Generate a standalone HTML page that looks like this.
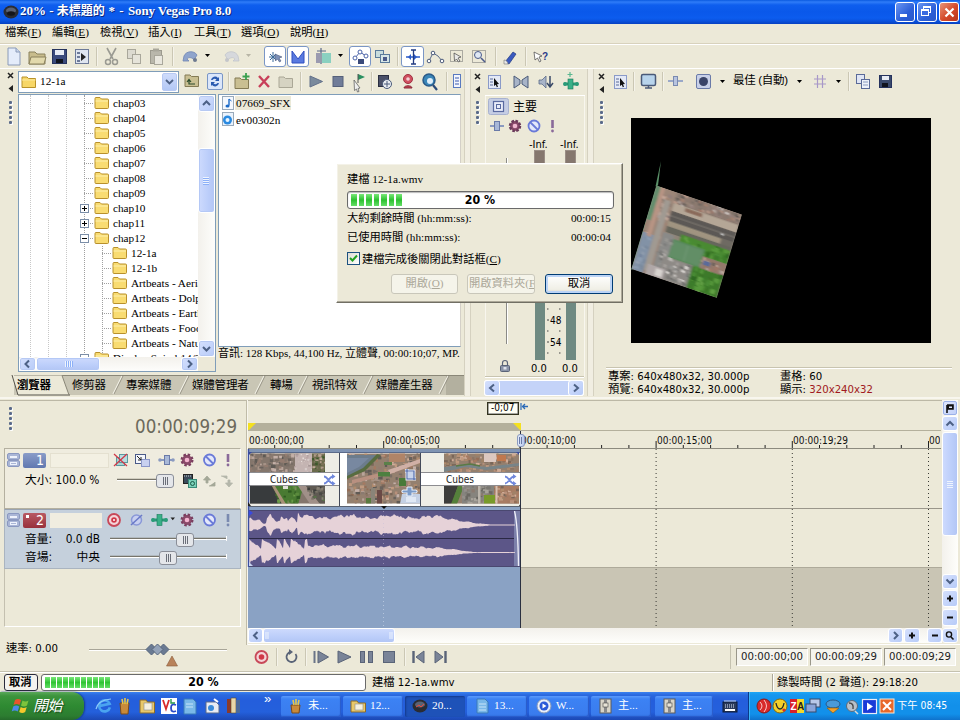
<!DOCTYPE html>
<html lang="zh-Hant"><head><meta charset="utf-8"><title>Sony Vegas Pro 8.0</title>
<style>
*{box-sizing:border-box;margin:0;padding:0}
html,body{width:960px;height:720px;overflow:hidden;background:#ece9d8}
body{position:relative;font-family:"Liberation Sans","Noto Sans CJK TC",sans-serif;font-size:12px;color:#000}
.a{position:absolute}
.ming{font-family:"Liberation Serif","Noto Sans CJK TC",serif}
.tah{font-family:"DejaVu Sans Condensed","DejaVu Sans","Liberation Sans","Noto Sans CJK TC",sans-serif;font-stretch:condensed}
.t{position:absolute;white-space:nowrap;line-height:1}
svg{position:absolute;overflow:visible}
</style></head><body>
<!-- title bar -->
<div class="a" style="left:0;top:0;width:960px;height:24px;background:linear-gradient(180deg,#0a5ae0 0,#2f7cf8 2px,#0e5eee 5px,#0a58ea 12px,#0c5cee 18px,#0a52de 21px,#0640c0 24px)"></div>
<svg style="left:3px;top:4px" width="16" height="16" viewBox="0 0 16 16"><ellipse cx="8" cy="8" rx="7.5" ry="6.5" fill="#2a2c33"/><ellipse cx="8" cy="6.5" rx="5" ry="3" fill="#5a6274"/><ellipse cx="8" cy="9.5" rx="4" ry="2.2" fill="#15161a"/></svg>
<div class="t ming" style="left:20px;top:4px;font-size:13px;font-weight:bold;color:#fff;text-shadow:1px 1px 0 #0a2a80" id="ttl">20% - <span style="font-size:12px">未標題的</span><span style="letter-spacing:0.5px"> * - </span><span style="letter-spacing:-0.12px">Sony Vegas Pro 8.0</span></div>
<!-- window buttons -->
<div class="a" style="left:895px;top:2px;width:20px;height:20px;border:1px solid #fff;border-radius:3px;background:linear-gradient(135deg,#6a96f2,#2c5fd8 60%,#2a58c8)"></div>
<div class="a" style="left:900px;top:14px;width:7px;height:3px;background:#fff"></div>
<div class="a" style="left:917px;top:2px;width:20px;height:20px;border:1px solid #fff;border-radius:3px;background:linear-gradient(135deg,#6a96f2,#2c5fd8 60%,#2a58c8)"></div>
<div class="a" style="left:923px;top:6px;width:8px;height:7px;border:1px solid #fff;border-top-width:2px"></div>
<div class="a" style="left:921px;top:9px;width:8px;height:7px;border:1px solid #fff;border-top-width:2px;background:#3a6ae0"></div>
<div class="a" style="left:939px;top:2px;width:20px;height:20px;border:1px solid #fff;border-radius:3px;background:linear-gradient(135deg,#e89478,#d4492a 55%,#b8351c)"></div>
<svg style="left:943.5px;top:6.5px" width="11" height="11" viewBox="0 0 11 11"><path d="M1.5 1.5 L9.5 9.5 M9.5 1.5 L1.5 9.5" stroke="#fff" stroke-width="2.2"/></svg>
<!-- menu bar -->
<div class="a" style="left:0;top:24px;width:960px;height:20px;background:#ece9d8"></div>
<div class="t ming" style="left:5px;top:27px;font-size:11.25px">檔案(<u>F</u>)</div>
<div class="t ming" style="left:52px;top:27px;font-size:11.25px">編輯(<u>E</u>)</div>
<div class="t ming" style="left:100px;top:27px;font-size:11.25px">檢視(<u>V</u>)</div>
<div class="t ming" style="left:148px;top:27px;font-size:11.25px">插入(<u>I</u>)</div>
<div class="t ming" style="left:194px;top:27px;font-size:11.25px">工具(<u>T</u>)</div>
<div class="t ming" style="left:241px;top:27px;font-size:11.25px">選項(<u>O</u>)</div>
<div class="t ming" style="left:290px;top:27px;font-size:11.25px">說明(<u>H</u>)</div>
<div class="a" style="left:0;top:43px;width:960px;height:1px;background:#d8d2bd"></div>
<div class="a" style="left:0;top:44px;width:960px;height:1px;background:#fff"></div>
<!-- main toolbar -->
<div class="a" style="left:0;top:45px;width:960px;height:23px;background:#ece9d8"></div>
<svg style="left:0;top:45px" width="560" height="23" viewBox="0 45 560 23">
<!-- new -->
<path d="M8 48h8l4 4v13H8z" fill="#e4ecfa" stroke="#8a9ab8" stroke-width="1"/><path d="M16 48v4h4" fill="#c9d6ec" stroke="#8a9ab8"/>
<!-- open -->
<path d="M29 52h6l2 2h8v10H29z" fill="#c8bc8c" stroke="#8a815c"/><path d="M31 57h15l-2 7H29z" fill="#e2d9ac" stroke="#8a815c"/>
<!-- save -->
<rect x="52.500" y="49.500" width="14" height="14" fill="#3a4a7c" stroke="#26335e"/><rect x="55" y="50" width="9" height="5" fill="#e8ecf4"/><rect x="56" y="59" width="7" height="4" fill="#10141f"/>
<!-- render as -->
<rect x="75.500" y="49.500" width="13" height="14" fill="#dfe5f0" stroke="#6d7a99"/><path d="M81 53l5 4-5 4z" fill="#222"/><rect x="77" y="52" width="3" height="2" fill="#6d7a99"/><rect x="77" y="56" width="3" height="2" fill="#6d7a99"/><rect x="77" y="60" width="3" height="2" fill="#6d7a99"/>
<path d="M96.500 47v19" stroke="#cbc7b4"/><path d="M97.500 47v19" stroke="#f5f3ea"/>
<!-- cut -->
<path d="M107 48l6 11M116 48l-6 11" stroke="#9a9a92" stroke-width="1.600" fill="none"/><circle cx="108" cy="62" r="2.500" fill="none" stroke="#9a9a92" stroke-width="1.500"/><circle cx="115" cy="62" r="2.500" fill="none" stroke="#9a9a92" stroke-width="1.500"/>
<!-- copy -->
<rect x="127.500" y="49.500" width="8" height="9" fill="#dcdad0" stroke="#a9a79b"/><rect x="132.500" y="54.500" width="8" height="9" fill="#e6e4da" stroke="#a9a79b"/>
<!-- paste -->
<rect x="150.500" y="50.500" width="11" height="13" fill="#b9b7ab" stroke="#9c9a8e"/><rect x="154.500" y="55.500" width="8" height="9" fill="#e9e7de" stroke="#a9a79b"/><rect x="153" y="48.500" width="6" height="3" fill="#a9a79b"/>
<path d="M172.500 47v19" stroke="#cbc7b4"/><path d="M173.500 47v19" stroke="#f5f3ea"/>
<!-- undo -->
<path d="M184 56c2-5 10-6 13-1l-3 5c-2-3-6-3-7-1l2 2h-6z" fill="#8fa4cc" stroke="#6e84b3" stroke-width=".8"/><circle cx="195" cy="60" r="2" fill="#6e7a90"/>
<path d="M205 54h5l-2.500 3z" fill="#000"/>
<!-- redo (disabled) -->
<path d="M238 56c-2-5-10-6-13-1l3 5c2-3 6-3 7-1l-2 2h6z" fill="#d6d8dc" stroke="#c2c5cc" stroke-width=".8"/><circle cx="227" cy="60" r="2" fill="#c4c6ca"/>
<path d="M246 54h5l-2.500 3z" fill="#b8b5a6"/>
<!-- pressed buttons -->
<rect x="264.500" y="46.500" width="21" height="20" rx="2.500" fill="#fff" stroke="#7a96c6"/>
<path d="M269 57h9M273 52v10M270 54l6 6M276 54l-6 6" stroke="#3a6a9a" stroke-width="1"/><path d="M275 54l7 3-3 1 2 3-1.500 1-2-3-2 2z" fill="#7c90b8" stroke="#49597c" stroke-width=".6"/>
<rect x="287.500" y="46.500" width="21" height="20" rx="2.500" fill="#fff" stroke="#7a96c6"/>
<path d="M292 51v12h12v-12l-6 8z" fill="#5a7ae0" stroke="#3050c0"/>
<!-- snapping teal icon -->
<rect x="316" y="53" width="4" height="10" fill="#9a9ab0"/><rect x="322" y="53" width="9" height="10" fill="#8ad0c0"/><path d="M321 48v16M317 51h9" stroke="#5a6a8a" stroke-width="1.200"/>
<path d="M338 54h5l-2.500 3z" fill="#000"/>
<rect x="349.500" y="46.500" width="21" height="20" rx="2.500" fill="#fff" stroke="#7a96c6"/>
<path d="M355 58l5-6 6 4" stroke="#4a62a8" fill="none"/><circle cx="355" cy="58" r="2" fill="#fff" stroke="#4a62a8"/><circle cx="360" cy="52" r="2" fill="#fff" stroke="#4a62a8"/><circle cx="366" cy="56" r="2" fill="#fff" stroke="#4a62a8"/><rect x="358" y="59" width="6" height="5" fill="#3a4a7a"/>
<!-- ignore event grouping -->
<rect x="375.500" y="50.500" width="8" height="7" fill="#c8dcdc" stroke="#5a7a9a"/><rect x="380.500" y="54.500" width="9" height="8" fill="#d6e6e6" stroke="#5a7a9a"/><rect x="383" y="57" width="4" height="4" fill="#4a5a8a"/>
<path d="M397.500 47v19" stroke="#cbc7b4"/><path d="M398.500 47v19" stroke="#f5f3ea"/>
<rect x="401.500" y="46.500" width="22" height="20" rx="2.500" fill="#fff" stroke="#7a96c6"/>
<path d="M406 57h14" stroke="#2a5ac8" stroke-width="1.500"/><path d="M408 57l3-3v6z M417 57l-3-3v6z" fill="#2a5ac8"/><path d="M413.500 50v14M411 50h5M411 64h5" stroke="#223a80" stroke-width="1.300"/>
<!-- envelope tool -->
<path d="M429 61l4-8 5 3 4 5" stroke="#5a6a8a" fill="none"/><circle cx="429" cy="61" r="1.800" fill="#fff" stroke="#4a5a7a"/><circle cx="433" cy="53" r="1.800" fill="#fff" stroke="#4a5a7a"/><circle cx="442" cy="61" r="1.800" fill="#fff" stroke="#4a5a7a"/>
<!-- selection tool -->
<rect x="450.500" y="50.500" width="12" height="11" fill="none" stroke="#6a6a6a" stroke-dasharray="1 1"/><path d="M454 53l7 4-3 1 2 3-1.500 1-2-3-2 2z" fill="#e8e8e8" stroke="#444" stroke-width=".7"/>
<!-- zoom tool -->
<rect x="472.500" y="50.500" width="13" height="12" fill="none" stroke="#6a6a6a" stroke-dasharray="1 1"/><circle cx="478" cy="55" r="3.500" fill="#dfe8f4" stroke="#4a5a8a"/><path d="M481 58l4 4" stroke="#4a5a8a" stroke-width="1.600"/>
<path d="M495.500 47v19" stroke="#cbc7b4"/><path d="M496.500 47v19" stroke="#f5f3ea"/>
<!-- properties -->
<path d="M505 62l8-10 3 2-7 10z" fill="#3a5ac0" stroke="#223a80" stroke-width=".7"/><path d="M504 60c2 0 4 2 4 4h-4z" fill="#e8e8e8" stroke="#777" stroke-width=".6"/>
<path d="M525.500 47v19" stroke="#cbc7b4"/><path d="M526.500 47v19" stroke="#f5f3ea"/>
<!-- whats this -->
<path d="M534 52l8 4-3 1 2 4-1.500 1-2-4-2.500 2z" fill="#fff" stroke="#444" stroke-width=".7"/><text x="542" y="60" font-family="Liberation Sans" font-size="10" font-weight="bold" fill="#2a3a8a">?</text>
</svg>
<!-- explorer panel -->
<div class="a" style="left:0;top:68px;width:960px;height:1px;background:#fff"></div>
<svg style="left:7px;top:72px" width="8" height="22" viewBox="0 0 8 22"><path d="M1 1l5 5M6 1l-5 5" stroke="#222" stroke-width="1.500"/><path d="M6 13v7l-4.500-3.500z" fill="#222"/></svg>
<div class="a" style="left:9px;top:101px;width:3px;height:3px;background:#5a6a8a;border-radius:1px;box-shadow:1px 1px 0 #fff"></div><div class="a" style="left:9px;top:106px;width:3px;height:3px;background:#5a6a8a;border-radius:1px;box-shadow:1px 1px 0 #fff"></div><div class="a" style="left:9px;top:111px;width:3px;height:3px;background:#5a6a8a;border-radius:1px;box-shadow:1px 1px 0 #fff"></div><div class="a" style="left:9px;top:116px;width:3px;height:3px;background:#5a6a8a;border-radius:1px;box-shadow:1px 1px 0 #fff"></div><div class="a" style="left:9px;top:121px;width:3px;height:3px;background:#5a6a8a;border-radius:1px;box-shadow:1px 1px 0 #fff"></div>
<div class="a" style="left:18px;top:71px;width:161px;height:22px;background:#fff;border:1px solid #7f9db9"></div>
<svg style="left:21px;top:74px" width="16" height="15" viewBox="0 0 16 15"><path d="M1 3h5l1.500 1.500h7v9H1z" fill="#f7d768" stroke="#b8922a"/><path d="M1 6h13.500" stroke="#fbeaa0"/></svg>
<div class="t ming" style="left:40px;top:76px;font-size:11.25px">12-1a</div>
<div class="a" style="left:162px;top:73px;width:15px;height:18px;background:linear-gradient(#cfdcfb,#b3c8f5);border:1px solid #b7c9f3;border-radius:2px"></div>
<svg style="left:165px;top:79px" width="9" height="6" viewBox="0 0 9 6"><path d="M1 1l3.500 3.500L8 1" stroke="#4d6185" stroke-width="1.800" fill="none"/></svg>
<svg style="left:0;top:69px" width="470" height="26" viewBox="0 69 470 26">
<path d="M185 75h5l1.500 1.500h7v10H185z" fill="#c9bf92" stroke="#847b55"/><path d="M195 84h-6v-4m-2 2l2-2.500 2 2.500" stroke="#2a4a2a" fill="none" stroke-width="1.200"/>
<rect x="207.500" y="73.500" width="15" height="16" rx="1.500" fill="#dbe6fa" stroke="#7a96c6"/><path d="M211 80a4 4 0 0 1 7-2l1-1v4h-4l1.500-1.500a2.500 2.500 0 0 0-4 .5zM219 83a4 4 0 0 1-7 2l-1 1v-4h4l-1.500 1.500a2.500 2.500 0 0 0 4-.5z" fill="#2a5ab0"/>
<path d="M228.500 72v19" stroke="#cbc7b4"/><path d="M229.500 72v19" stroke="#f5f3ea"/>
<path d="M235 78h5l1.500 1.500h7v9H235z" fill="#c9bf92" stroke="#847b55"/><path d="M246 73v7M242.500 76.500h7" stroke="#3aa050" stroke-width="1.800"/>
<path d="M259 76l10 11M269 76l-10 11" stroke="#c8405a" stroke-width="2.400"/>
<path d="M279 77h5l1.500 1.500h7v9H279z" fill="#d6d3c2" stroke="#aaa796"/>
<path d="M300.500 72v19" stroke="#cbc7b4"/><path d="M301.500 72v19" stroke="#f5f3ea"/>
<path d="M310 76l12.500 5.500-12.500 5.500z" fill="#7a8a9c" stroke="#62708a"/>
<rect x="333" y="76.500" width="10" height="10" fill="#707c98" stroke="#55607a"/>
<path d="M354 80l6 8-2 .5 1 3-1.500.5-1-3-2 1.500z" fill="#eee" stroke="#555" stroke-width=".7"/><path d="M358 74l7 3-7 3z" fill="#2a9060"/><path d="M358 74v9" stroke="#555"/>
<path d="M371.500 72v19" stroke="#cbc7b4"/><path d="M372.500 72v19" stroke="#f5f3ea"/>
<rect x="378.500" y="75.500" width="10" height="11" fill="#4a5068" stroke="#2a2e40"/><circle cx="387" cy="84" r="4.500" fill="#e8ecf2" stroke="#4a5a7a"/><path d="M387 81v6M384 84h6" stroke="#4a5a7a"/>
<circle cx="408" cy="79" r="4.500" fill="#d05060" stroke="#a03040"/><path d="M404 88c0-3 8-3 8 0z" fill="#c04050" stroke="#8a2a38"/><circle cx="408" cy="79" r="1.800" fill="#f4d0d4"/>
<circle cx="429" cy="80" r="6" fill="#3a86b8" stroke="#2a5a88" stroke-width="1.500"/><circle cx="430" cy="81" r="3" fill="#dfeefa"/><path d="M433 85l4 5" stroke="#2a4a78" stroke-width="2.200"/>
<path d="M446.500 72v19" stroke="#cbc7b4"/><path d="M447.500 72v19" stroke="#f5f3ea"/>
<rect x="453.500" y="74.500" width="7" height="13" fill="#f4f6fc" stroke="#5a7ac0"/><path d="M455 78h4M455 81h4M455 84h4" stroke="#3a5ab0"/>
</svg>
<div class="a" style="left:18px;top:94px;width:198px;height:278px;background:#fff;border:1px solid #7f9db9"></div>
<div class="a" style="left:19px;top:95px;width:179px;height:262px;overflow:hidden">
<div class="a" style="left:11px;top:0px;width:0;height:262px;border-left:1px dotted #c8c8c8"></div>
<div class="a" style="left:29px;top:0px;width:0;height:262px;border-left:1px dotted #c8c8c8"></div>
<div class="a" style="left:47px;top:0px;width:0;height:262px;border-left:1px dotted #c8c8c8"></div>
<div class="a" style="left:65px;top:0px;width:0;height:262px;border-left:1px dotted #a0a0a0"></div>
<div class="a" style="left:83px;top:151px;width:0;height:111px;border-left:1px dotted #a0a0a0"></div>
<div class="a" style="left:65px;top:8px;width:9px;height:0;border-top:1px dotted #a0a0a0"></div>
<svg style="left:75px;top:1px" width="16" height="13" viewBox="0 0 16 13"><path d="M1 2.500q0-1 1-1h4l1.500 1.500h6q1 0 1 1v7.500q0 1-1 1h-11.500q-1 0-1-1z" fill="#f9dc72" stroke="#b8902c"/><path d="M1.500 5h12.500" stroke="#fdf0b0"/></svg>
<div class="t ming" style="left:94px;top:3px;font-size:11.25px">chap03</div>
<div class="a" style="left:65px;top:23px;width:9px;height:0;border-top:1px dotted #a0a0a0"></div>
<svg style="left:75px;top:16px" width="16" height="13" viewBox="0 0 16 13"><path d="M1 2.500q0-1 1-1h4l1.500 1.500h6q1 0 1 1v7.500q0 1-1 1h-11.500q-1 0-1-1z" fill="#f9dc72" stroke="#b8902c"/><path d="M1.500 5h12.500" stroke="#fdf0b0"/></svg>
<div class="t ming" style="left:94px;top:18px;font-size:11.25px">chap04</div>
<div class="a" style="left:65px;top:38px;width:9px;height:0;border-top:1px dotted #a0a0a0"></div>
<svg style="left:75px;top:31px" width="16" height="13" viewBox="0 0 16 13"><path d="M1 2.500q0-1 1-1h4l1.500 1.500h6q1 0 1 1v7.500q0 1-1 1h-11.500q-1 0-1-1z" fill="#f9dc72" stroke="#b8902c"/><path d="M1.500 5h12.500" stroke="#fdf0b0"/></svg>
<div class="t ming" style="left:94px;top:33px;font-size:11.25px">chap05</div>
<div class="a" style="left:65px;top:53px;width:9px;height:0;border-top:1px dotted #a0a0a0"></div>
<svg style="left:75px;top:46px" width="16" height="13" viewBox="0 0 16 13"><path d="M1 2.500q0-1 1-1h4l1.500 1.500h6q1 0 1 1v7.500q0 1-1 1h-11.500q-1 0-1-1z" fill="#f9dc72" stroke="#b8902c"/><path d="M1.500 5h12.500" stroke="#fdf0b0"/></svg>
<div class="t ming" style="left:94px;top:48px;font-size:11.25px">chap06</div>
<div class="a" style="left:65px;top:68px;width:9px;height:0;border-top:1px dotted #a0a0a0"></div>
<svg style="left:75px;top:61px" width="16" height="13" viewBox="0 0 16 13"><path d="M1 2.500q0-1 1-1h4l1.500 1.500h6q1 0 1 1v7.500q0 1-1 1h-11.500q-1 0-1-1z" fill="#f9dc72" stroke="#b8902c"/><path d="M1.500 5h12.500" stroke="#fdf0b0"/></svg>
<div class="t ming" style="left:94px;top:63px;font-size:11.25px">chap07</div>
<div class="a" style="left:65px;top:83px;width:9px;height:0;border-top:1px dotted #a0a0a0"></div>
<svg style="left:75px;top:76px" width="16" height="13" viewBox="0 0 16 13"><path d="M1 2.500q0-1 1-1h4l1.500 1.500h6q1 0 1 1v7.500q0 1-1 1h-11.500q-1 0-1-1z" fill="#f9dc72" stroke="#b8902c"/><path d="M1.500 5h12.500" stroke="#fdf0b0"/></svg>
<div class="t ming" style="left:94px;top:78px;font-size:11.25px">chap08</div>
<div class="a" style="left:65px;top:98px;width:9px;height:0;border-top:1px dotted #a0a0a0"></div>
<svg style="left:75px;top:91px" width="16" height="13" viewBox="0 0 16 13"><path d="M1 2.500q0-1 1-1h4l1.500 1.500h6q1 0 1 1v7.500q0 1-1 1h-11.500q-1 0-1-1z" fill="#f9dc72" stroke="#b8902c"/><path d="M1.500 5h12.500" stroke="#fdf0b0"/></svg>
<div class="t ming" style="left:94px;top:93px;font-size:11.25px">chap09</div>
<div class="a" style="left:65px;top:113px;width:9px;height:0;border-top:1px dotted #a0a0a0"></div>
<div class="a" style="left:61px;top:109px;width:9px;height:9px;background:#fff;border:1px solid #7b8ea8"></div><div class="a" style="left:63px;top:113px;width:5px;height:1px;background:#000"></div><div class="a" style="left:65px;top:111px;width:1px;height:5px;background:#000"></div>
<svg style="left:75px;top:106px" width="16" height="13" viewBox="0 0 16 13"><path d="M1 2.500q0-1 1-1h4l1.500 1.500h6q1 0 1 1v7.500q0 1-1 1h-11.500q-1 0-1-1z" fill="#f9dc72" stroke="#b8902c"/><path d="M1.500 5h12.500" stroke="#fdf0b0"/></svg>
<div class="t ming" style="left:94px;top:108px;font-size:11.25px">chap10</div>
<div class="a" style="left:65px;top:128px;width:9px;height:0;border-top:1px dotted #a0a0a0"></div>
<div class="a" style="left:61px;top:124px;width:9px;height:9px;background:#fff;border:1px solid #7b8ea8"></div><div class="a" style="left:63px;top:128px;width:5px;height:1px;background:#000"></div><div class="a" style="left:65px;top:126px;width:1px;height:5px;background:#000"></div>
<svg style="left:75px;top:121px" width="16" height="13" viewBox="0 0 16 13"><path d="M1 2.500q0-1 1-1h4l1.500 1.500h6q1 0 1 1v7.500q0 1-1 1h-11.500q-1 0-1-1z" fill="#f9dc72" stroke="#b8902c"/><path d="M1.500 5h12.500" stroke="#fdf0b0"/></svg>
<div class="t ming" style="left:94px;top:123px;font-size:11.25px">chap11</div>
<div class="a" style="left:65px;top:143px;width:9px;height:0;border-top:1px dotted #a0a0a0"></div>
<div class="a" style="left:61px;top:139px;width:9px;height:9px;background:#fff;border:1px solid #7b8ea8"></div><div class="a" style="left:63px;top:143px;width:5px;height:1px;background:#000"></div>
<svg style="left:75px;top:136px" width="16" height="13" viewBox="0 0 16 13"><path d="M1 2.500q0-1 1-1h4l1.500 1.500h6q1 0 1 1v7.500q0 1-1 1h-11.500q-1 0-1-1z" fill="#f9dc72" stroke="#b8902c"/><path d="M1.500 5h12.500" stroke="#fdf0b0"/></svg>
<div class="t ming" style="left:94px;top:138px;font-size:11.25px">chap12</div>
<div class="a" style="left:83px;top:158px;width:9px;height:0;border-top:1px dotted #a0a0a0"></div>
<svg style="left:93px;top:151px" width="16" height="13" viewBox="0 0 16 13"><path d="M1 2.500q0-1 1-1h4l1.500 1.500h6q1 0 1 1v7.500q0 1-1 1h-11.500q-1 0-1-1z" fill="#f9dc72" stroke="#b8902c"/><path d="M1.500 5h12.500" stroke="#fdf0b0"/></svg>
<div class="t ming" style="left:112px;top:153px;font-size:11.25px">12-1a</div>
<div class="a" style="left:83px;top:173px;width:9px;height:0;border-top:1px dotted #a0a0a0"></div>
<svg style="left:93px;top:166px" width="16" height="13" viewBox="0 0 16 13"><path d="M1 2.500q0-1 1-1h4l1.500 1.500h6q1 0 1 1v7.500q0 1-1 1h-11.500q-1 0-1-1z" fill="#f9dc72" stroke="#b8902c"/><path d="M1.500 5h12.500" stroke="#fdf0b0"/></svg>
<div class="t ming" style="left:112px;top:168px;font-size:11.25px">12-1b</div>
<div class="a" style="left:83px;top:188px;width:9px;height:0;border-top:1px dotted #a0a0a0"></div>
<svg style="left:93px;top:181px" width="16" height="13" viewBox="0 0 16 13"><path d="M1 2.500q0-1 1-1h4l1.500 1.500h6q1 0 1 1v7.500q0 1-1 1h-11.500q-1 0-1-1z" fill="#f9dc72" stroke="#b8902c"/><path d="M1.500 5h12.500" stroke="#fdf0b0"/></svg>
<div class="t ming" style="left:112px;top:183px;font-size:11.25px">Artbeats - Aeria</div>
<div class="a" style="left:83px;top:203px;width:9px;height:0;border-top:1px dotted #a0a0a0"></div>
<svg style="left:93px;top:196px" width="16" height="13" viewBox="0 0 16 13"><path d="M1 2.500q0-1 1-1h4l1.500 1.500h6q1 0 1 1v7.500q0 1-1 1h-11.500q-1 0-1-1z" fill="#f9dc72" stroke="#b8902c"/><path d="M1.500 5h12.500" stroke="#fdf0b0"/></svg>
<div class="t ming" style="left:112px;top:198px;font-size:11.25px">Artbeats - Dolp</div>
<div class="a" style="left:83px;top:218px;width:9px;height:0;border-top:1px dotted #a0a0a0"></div>
<svg style="left:93px;top:211px" width="16" height="13" viewBox="0 0 16 13"><path d="M1 2.500q0-1 1-1h4l1.500 1.500h6q1 0 1 1v7.500q0 1-1 1h-11.500q-1 0-1-1z" fill="#f9dc72" stroke="#b8902c"/><path d="M1.500 5h12.500" stroke="#fdf0b0"/></svg>
<div class="t ming" style="left:112px;top:213px;font-size:11.25px">Artbeats - Earth</div>
<div class="a" style="left:83px;top:233px;width:9px;height:0;border-top:1px dotted #a0a0a0"></div>
<svg style="left:93px;top:226px" width="16" height="13" viewBox="0 0 16 13"><path d="M1 2.500q0-1 1-1h4l1.500 1.500h6q1 0 1 1v7.500q0 1-1 1h-11.500q-1 0-1-1z" fill="#f9dc72" stroke="#b8902c"/><path d="M1.500 5h12.500" stroke="#fdf0b0"/></svg>
<div class="t ming" style="left:112px;top:228px;font-size:11.25px">Artbeats - Food</div>
<div class="a" style="left:83px;top:248px;width:9px;height:0;border-top:1px dotted #a0a0a0"></div>
<svg style="left:93px;top:241px" width="16" height="13" viewBox="0 0 16 13"><path d="M1 2.500q0-1 1-1h4l1.500 1.500h6q1 0 1 1v7.500q0 1-1 1h-11.500q-1 0-1-1z" fill="#f9dc72" stroke="#b8902c"/><path d="M1.500 5h12.500" stroke="#fdf0b0"/></svg>
<div class="t ming" style="left:112px;top:243px;font-size:11.25px">Artbeats - Natu</div>
<div class="a" style="left:65px;top:263px;width:9px;height:0;border-top:1px dotted #a0a0a0"></div>
<div class="a" style="left:61px;top:259px;width:9px;height:9px;background:#fff;border:1px solid #7b8ea8"></div><div class="a" style="left:63px;top:263px;width:5px;height:1px;background:#000"></div>
<svg style="left:75px;top:256px" width="16" height="13" viewBox="0 0 16 13"><path d="M1 2.500q0-1 1-1h4l1.500 1.500h6q1 0 1 1v7.500q0 1-1 1h-11.500q-1 0-1-1z" fill="#f9dc72" stroke="#b8902c"/><path d="M1.500 5h12.500" stroke="#fdf0b0"/></svg>
<div class="t ming" style="left:94px;top:258px;font-size:11.25px">Display Spiral 14/3</div>
</div>
<div class="a" style="left:198px;top:95px;width:17px;height:262px;background:linear-gradient(90deg,#f3f1ec,#fdfdfb)"></div>
<div class="a" style="left:198px;top:95px;width:17px;height:17px;background:linear-gradient(135deg,#d5e0fd,#b7cbf8);border:1px solid #fff;border-radius:3px;box-shadow:inset 0 0 0 1px #b7c9f3"></div><svg style="left:0;top:0" width="960" height="720"><path d="M203.0 105.0L206.5 101.5L210.0 105.0" stroke="#4d6185" stroke-width="2" fill="none"/></svg>
<div class="a" style="left:198px;top:148px;width:17px;height:65px;background:linear-gradient(90deg,#cddafd,#bccefa 60%,#b3c6f5);border:1px solid #fff;border-radius:3px;box-shadow:inset 0 0 0 1px #b4c8f6"></div><div class="a" style="left:203px;top:177px;width:6px;height:1px;background:#eef4fe;box-shadow:0 1px 0 #8cb0f8"></div><div class="a" style="left:203px;top:179px;width:6px;height:1px;background:#eef4fe;box-shadow:0 1px 0 #8cb0f8"></div><div class="a" style="left:203px;top:181px;width:6px;height:1px;background:#eef4fe;box-shadow:0 1px 0 #8cb0f8"></div><div class="a" style="left:203px;top:183px;width:6px;height:1px;background:#eef4fe;box-shadow:0 1px 0 #8cb0f8"></div>
<div class="a" style="left:198px;top:340px;width:17px;height:17px;background:linear-gradient(135deg,#d5e0fd,#b7cbf8);border:1px solid #fff;border-radius:3px;box-shadow:inset 0 0 0 1px #b7c9f3"></div><svg style="left:0;top:0" width="960" height="720"><path d="M203.0 347.0L206.5 350.5L210.0 347.0" stroke="#4d6185" stroke-width="2" fill="none"/></svg>
<div class="a" style="left:19px;top:357px;width:179px;height:14px;background:linear-gradient(#f3f1ec,#fdfdfb)"></div>
<div class="a" style="left:198px;top:357px;width:17px;height:14px;background:#ece9d8"></div>
<div class="a" style="left:19px;top:357px;width:17px;height:14px;background:linear-gradient(135deg,#d5e0fd,#b7cbf8);border:1px solid #fff;border-radius:3px;box-shadow:inset 0 0 0 1px #b7c9f3"></div><svg style="left:0;top:0" width="960" height="720"><path d="M29.0 360.5L25.5 364.0L29.0 367.5" stroke="#4d6185" stroke-width="2" fill="none"/></svg>
<div class="a" style="left:36px;top:357px;width:64px;height:14px;background:linear-gradient(180deg,#cddafd,#bccefa 60%,#b3c6f5);border:1px solid #fff;border-radius:3px;box-shadow:inset 0 0 0 1px #b4c8f6"></div><div class="a" style="left:65px;top:361px;width:1px;height:6px;background:#eef4fe;box-shadow:1px 0 0 #8cb0f8"></div><div class="a" style="left:67px;top:361px;width:1px;height:6px;background:#eef4fe;box-shadow:1px 0 0 #8cb0f8"></div><div class="a" style="left:69px;top:361px;width:1px;height:6px;background:#eef4fe;box-shadow:1px 0 0 #8cb0f8"></div><div class="a" style="left:71px;top:361px;width:1px;height:6px;background:#eef4fe;box-shadow:1px 0 0 #8cb0f8"></div>
<div class="a" style="left:181px;top:357px;width:17px;height:14px;background:linear-gradient(135deg,#d5e0fd,#b7cbf8);border:1px solid #fff;border-radius:3px;box-shadow:inset 0 0 0 1px #b7c9f3"></div><svg style="left:0;top:0" width="960" height="720"><path d="M188.0 360.5L191.5 364.0L188.0 367.5" stroke="#4d6185" stroke-width="2" fill="none"/></svg>
<div class="a" style="left:218px;top:94px;width:243px;height:253px;background:#fff;border:1px solid #7f9db9;border-right-color:#d4d0c8"></div>
<div class="a" style="left:235px;top:96px;width:56px;height:14px;background:#ece9d8"></div>
<svg style="left:221px;top:96px" width="14" height="32" viewBox="0 0 14 32"><rect x="1.500" y=".5" width="11" height="13" fill="#f4f8fe" stroke="#9ab"/><path d="M8 3v6.500" stroke="#1a6ac8" stroke-width="1.400"/><ellipse cx="6.500" cy="10" rx="2" ry="1.500" fill="#1a6ac8"/><path d="M8 3l2.500 2" stroke="#1a6ac8"/><rect x="1.500" y="16.500" width="11" height="13" fill="#eaf2fc" stroke="#9ab"/><circle cx="6.500" cy="24" r="4.500" fill="#2a8ae0"/><circle cx="6.500" cy="24" r="2" fill="#e8f4ff"/></svg>
<div class="t ming" style="left:236px;top:98px;font-size:11.25px">07669_SFX</div>
<div class="t ming" style="left:236px;top:114.500px;font-size:11.25px">ev00302n</div>
<div class="t ming" style="left:218px;top:348px;font-size:11px;" id="info">音訊: 128 Kbps, 44,100 Hz, 立體聲, 00:00:10;07, MP.</div>
<div class="a" style="left:461px;top:340px;width:9px;height:25px;background:#ece9d8"></div>
<div class="a" style="left:14px;top:375px;width:451px;height:1px;background:#8a8778"></div>
<div class="a" style="left:14px;top:376px;width:451px;height:19px;background:#c9c6b5"></div>
<div class="a" style="left:446px;top:376px;width:19px;height:19px;background:#b3b09f"></div>
<svg style="left:0;top:375px" width="470" height="21" viewBox="0 375 470 21">
<path d="M12 375.500h50l7 19.500H18z" fill="#ece9d8"/><path d="M12 375l6 20h52" stroke="#55524a" fill="none" stroke-width="1"/><path d="M62 375.500l7 19.500" stroke="#8a8778"/>
<path d="M113 394l9-18M179 394l9-18M255 394l9-18M298 394l9-18M363 394l9-18M439 394l9-18" stroke="#f4f2e8" stroke-width="1.200"/>
<path d="M114 394l9-18M180 394l9-18M256 394l9-18M299 394l9-18M364 394l9-18M440 394l9-18" stroke="#8a8778" stroke-width=".8"/>
</svg>
<div class="t" style="left:17px;top:380px;font-size:11.5px;font-weight:bold;letter-spacing:-0.2px">瀏覽器</div>
<div class="t" style="left:72px;top:380px;font-size:11.5px;letter-spacing:-0.2px">修剪器</div>
<div class="t" style="left:126px;top:380px;font-size:11.5px;letter-spacing:-0.2px">專案媒體</div>
<div class="t" style="left:192px;top:380px;font-size:11.5px;letter-spacing:-0.2px">媒體管理者</div>
<div class="t" style="left:270px;top:380px;font-size:11.5px;letter-spacing:-0.2px">轉場</div>
<div class="t" style="left:312px;top:380px;font-size:11.5px;letter-spacing:-0.2px">視訊特效</div>
<div class="t" style="left:376px;top:380px;font-size:11.5px;letter-spacing:-0.2px">媒體產生器</div>
<div class="a" style="left:464px;top:69px;width:1px;height:327px;background:#d5d1c0"></div>
<div class="a" style="left:465px;top:69px;width:5px;height:327px;background:#f1eee2"></div>
<!-- mixer panel -->
<div class="a" style="left:470px;top:69px;width:1px;height:327px;background:#d5d1c0"></div>
<svg style="left:474px;top:73px" width="8" height="22" viewBox="0 0 8 22"><path d="M1 1l5 5M6 1l-5 5" stroke="#222" stroke-width="1.500"/><path d="M6 13v7l-4.500-3.500z" fill="#222"/></svg>
<div class="a" style="left:476px;top:101px;width:3px;height:3px;background:#5a6a8a;border-radius:1px;box-shadow:1px 1px 0 #fff"></div><div class="a" style="left:476px;top:106px;width:3px;height:3px;background:#5a6a8a;border-radius:1px;box-shadow:1px 1px 0 #fff"></div><div class="a" style="left:476px;top:111px;width:3px;height:3px;background:#5a6a8a;border-radius:1px;box-shadow:1px 1px 0 #fff"></div><div class="a" style="left:476px;top:116px;width:3px;height:3px;background:#5a6a8a;border-radius:1px;box-shadow:1px 1px 0 #fff"></div><div class="a" style="left:476px;top:121px;width:3px;height:3px;background:#5a6a8a;border-radius:1px;box-shadow:1px 1px 0 #fff"></div>
<svg style="left:470px;top:69px" width="120" height="330" viewBox="470 69 120 330">
<rect x="488.500" y="75.500" width="12" height="13" fill="#e4e9f6" stroke="#8a9ac8"/><path d="M490 79h3M490 82h3M490 85h3" stroke="#5a6a98"/><path d="M494 78l5 6-2 .3 1 2.500-1.200.5-1-2.500-1.800 1.200z" fill="#111"/>
<path d="M514 76l6 4v4l-6 4zM528 76l-6 4v4l6 4z" fill="#a8b4c8" stroke="#4a5a78"/>
<path d="M539 80h3l4-4v12l-4-4h-3z" fill="#a8b4c8" stroke="#5a6a88" stroke-width=".8"/><path d="M550 76v10M547 83l3 4 3-4" stroke="#3a4a68" stroke-width="1.500" fill="none"/>
<path d="M564 84h14" stroke="#2a9a78" stroke-width="3"/><rect x="568" y="79" width="5" height="10" fill="#3ab088" stroke="#1a7a5a" stroke-width=".6"/><circle cx="565" cy="84" r="2" fill="#2a9a78"/><circle cx="577" cy="84" r="2" fill="#2a9a78"/><path d="M570 72v5M567.500 74.500h5" stroke="#5ab890" stroke-width="1.200"/>
<path d="M485 95.500h100" stroke="#fff"/><path d="M485.500 96v281M584.500 96v281" stroke="#f8f6ee"/>
<rect x="488.500" y="98.500" width="20" height="16" rx="2" fill="#c5cde4" stroke="#a8b2d0"/><rect x="493.500" y="101.500" width="10" height="10" fill="#e8ecf8" stroke="#5a6aa0" stroke-width="1.200"/><rect x="496.500" y="104.500" width="4" height="4" fill="none" stroke="#5a6aa0"/>
<path d="M490 126h14" stroke="#8a9ac0" stroke-width="2"/><rect x="494.500" y="121.500" width="5" height="9" fill="#a8b8d8" stroke="#6a7aa8"/>
<circle cx="515" cy="126" r="5" fill="#8a4a6a" stroke="#6a3a5a" stroke-width="2.500" stroke-dasharray="2.500 1.400"/><circle cx="515" cy="126" r="2.300" fill="#f0b8d0"/>
<circle cx="534" cy="126" r="5.500" fill="#e4e8fa" stroke="#6a7ad8" stroke-width="1.800"/><path d="M530 122l8 8" stroke="#6a7ad8" stroke-width="1.800"/>
<path d="M552.500 120v8" stroke="#8a6a9a" stroke-width="2.600"/><circle cx="552.500" cy="131" r="1.400" fill="#8a6a9a"/>
<rect x="534" y="150" width="11" height="13" fill="#9a8e86"/><rect x="535" y="151" width="9" height="12" fill="#85776e"/>
<rect x="565" y="150" width="11" height="13" fill="#9a8e86"/><rect x="566" y="151" width="9" height="12" fill="#85776e"/>
<rect x="535" y="164" width="10" height="196" fill="#6f8a82"/><rect x="566" y="164" width="10" height="196" fill="#6f8a82"/>
<path d="M506.500 158v186" stroke="#8a8a86"/><path d="M507.500 158v186" stroke="#fff"/>
<path d="M547 320h2M558 320h2M547 342h2M558 342h2M547 309h1.500M547 331h1.500M547 353h1.500M559 309h1.500M559 331h1.500M559 353h1.500" stroke="#444"/>
<rect x="500.500" y="365.500" width="9" height="6" rx="1" fill="#8a94a8" stroke="#5a6478"/><path d="M502.500 365v-2a2.500 2.500 0 0 1 5 0v2" fill="none" stroke="#5a6478" stroke-width="1.200"/><rect x="503.500" y="367" width="3" height="2.500" fill="#dfe3ec"/>
<path d="M485 376.500h99" stroke="#c8c4b0"/><path d="M485 377.500h99" stroke="#fff"/>
</svg>
<div class="t" style="left:513px;top:101px;font-size:12px">主要</div>
<div class="t tah" style="left:529px;top:139px;font-size:11px;">-Inf.</div>
<div class="t tah" style="left:560px;top:139px;font-size:11px;">-Inf.</div>
<div class="t tah" style="left:550px;top:316px;font-size:10px">48</div>
<div class="t tah" style="left:550px;top:338px;font-size:10px">54</div>
<div class="t tah" style="left:531px;top:363px;font-size:11px">0.0</div>
<div class="t tah" style="left:562px;top:363px;font-size:11px">0.0</div>
<div class="a" style="left:484px;top:380px;width:100px;height:16px;background:#c4d3f8;border:1px solid #fff;border-radius:2px"></div>
<div class="a" style="left:484px;top:380px;width:16px;height:16px;background:linear-gradient(135deg,#d5e0fd,#b7cbf8);border:1px solid #fff;border-radius:3px"></div>
<div class="a" style="left:568px;top:380px;width:16px;height:16px;background:linear-gradient(135deg,#d5e0fd,#b7cbf8);border:1px solid #fff;border-radius:3px"></div>
<svg style="left:484px;top:380px" width="100" height="16" viewBox="0 0 100 16"><path d="M10 4.500L6 8l4 3.500" stroke="#4d6185" stroke-width="2" fill="none"/><path d="M90 4.500L94 8l-4 3.500" stroke="#4d6185" stroke-width="2" fill="none"/></svg>
<div class="a" style="left:587px;top:69px;width:1px;height:327px;background:#d5d1c0"></div>
<div class="a" style="left:588px;top:69px;width:5px;height:327px;background:#f1eee2"></div>
<div class="a" style="left:593px;top:69px;width:1px;height:327px;background:#d5d1c0"></div>
<!-- preview panel -->
<svg style="left:598px;top:73px" width="8" height="22" viewBox="0 0 8 22"><path d="M1 1l5 5M6 1l-5 5" stroke="#222" stroke-width="1.500"/><path d="M6 13v7l-4.500-3.500z" fill="#222"/></svg>
<div class="a" style="left:600px;top:101px;width:3px;height:3px;background:#5a6a8a;border-radius:1px;box-shadow:1px 1px 0 #fff"></div><div class="a" style="left:600px;top:106px;width:3px;height:3px;background:#5a6a8a;border-radius:1px;box-shadow:1px 1px 0 #fff"></div><div class="a" style="left:600px;top:111px;width:3px;height:3px;background:#5a6a8a;border-radius:1px;box-shadow:1px 1px 0 #fff"></div><div class="a" style="left:600px;top:116px;width:3px;height:3px;background:#5a6a8a;border-radius:1px;box-shadow:1px 1px 0 #fff"></div><div class="a" style="left:600px;top:121px;width:3px;height:3px;background:#5a6a8a;border-radius:1px;box-shadow:1px 1px 0 #fff"></div>
<svg style="left:593px;top:69px" width="367" height="30" viewBox="593 69 367 30">
<rect x="614.500" y="75.500" width="12" height="13" fill="#e4e9f6" stroke="#8a9ac8"/><path d="M616 79h3M616 82h3M616 85h3" stroke="#5a6a98"/><path d="M620 78l5 6-2 .3 1 2.500-1.200.5-1-2.500-1.800 1.200z" fill="#111"/>
<path d="M633.500 72v19" stroke="#cbc7b4"/><path d="M634.500 72v19" stroke="#f5f3ea"/>
<rect x="641.500" y="74.500" width="14" height="11" rx="1.500" fill="#b8d4ec" stroke="#4a5a78" stroke-width="1.500"/><path d="M645 88h7M648.500 86v2" stroke="#4a5a78" stroke-width="1.500"/>
<path d="M662.500 72v19" stroke="#cbc7b4"/><path d="M663.500 72v19" stroke="#f5f3ea"/>
<path d="M668 81h15" stroke="#9aa8c8" stroke-width="2"/><rect x="673.500" y="76.500" width="4" height="9" fill="#b8c4e0" stroke="#7a8ab0"/>
<rect x="696.500" y="74.500" width="14" height="14" rx="1.500" fill="#c8d0e8" stroke="#6a7aa8"/><circle cx="703.500" cy="81.500" r="4.500" fill="#3a4468"/>
<path d="M720 80h5l-2.500 3z" fill="#000"/><path d="M797 80h5l-2.500 3z" fill="#000"/><path d="M836 80h5l-2.500 3z" fill="#000"/>
<path d="M814 79h12M814 84h12M817.500 75v13M822.500 75v13" stroke="#a898c8" stroke-width="1.200"/>
<path d="M848.500 72v19" stroke="#cbc7b4"/><path d="M849.500 72v19" stroke="#f5f3ea"/>
<rect x="856.500" y="74.500" width="8" height="9" fill="#dfe5f4" stroke="#5a6a98"/><rect x="861.500" y="79.500" width="8" height="9" fill="#eef2fa" stroke="#5a6a98"/><path d="M863 82h5M863 85h5" stroke="#8a9ac0"/>
<rect x="879.500" y="75.500" width="12" height="12" fill="#3a4a6c" stroke="#26335e"/><rect x="882" y="76" width="7" height="4" fill="#e8ecf4"/><rect x="882" y="83" width="6" height="4" fill="#10141f"/>
</svg>
<div class="t" style="left:733px;top:75px;font-size:11.5px;letter-spacing:-0.3px">最佳 (自動)</div>
<div class="a" style="left:631px;top:118px;width:300px;height:225px;background:#000"></div>
<svg style="left:631px;top:118px" width="300" height="225" viewBox="631 118 300 225"><defs><clipPath id="pvc"><rect x="0" y="0" width="100" height="100"/></clipPath><filter id="bl" x="-5%" y="-5%" width="110%" height="110%"><feGaussianBlur stdDeviation="0.9"/></filter></defs><path d="M661 161l-3 24.500-2.500 1z" fill="#5a9068"/><path d="M656.200 186l-25 83.500 1.200.3 25-83z" fill="#6a9a78"/><g transform="matrix(0.853 0.289 -0.252 0.835 656.700 185.500)" clip-path="url(#pvc)"><rect x="0" y="0" width="100" height="100" fill="#8e8478"/><g filter="url(#bl)"><rect x="0" y="0" width="24" height="100" fill="#9c8678"/><rect x="16.1" y="53.6" width="4.5" height="4.1" fill="#b0a49c"/><rect x="21.5" y="37.1" width="2.1" height="3.3" fill="#a08070"/><rect x="4.8" y="30.9" width="2.5" height="3.3" fill="#a07868"/><rect x="8.4" y="9.6" width="3.0" height="4.0" fill="#94807a"/><rect x="2.2" y="34.7" width="2.6" height="4.2" fill="#a08070"/><rect x="-0.9" y="43.3" width="2.5" height="4.7" fill="#a08070"/><rect x="18.7" y="30.9" width="5.5" height="2.8" fill="#b89888"/><rect x="3.6" y="54.3" width="2.7" height="4.7" fill="#94807a"/><rect x="2.8" y="7.6" width="3.2" height="3.0" fill="#9a8678"/><rect x="12.3" y="33.4" width="3.3" height="4.3" fill="#c4a89a"/><rect x="6.3" y="40.1" width="2.3" height="3.0" fill="#a08070"/><rect x="0.3" y="55.6" width="3.9" height="4.0" fill="#8a7a70"/><rect x="7.2" y="31.4" width="5.8" height="3.0" fill="#94807a"/><rect x="-0.8" y="1.7" width="3.5" height="3.6" fill="#a08070"/><rect x="1.6" y="13.1" width="4.5" height="4.7" fill="#6a625c"/><rect x="10.9" y="44.8" width="3.4" height="3.0" fill="#9a8678"/><rect x="6.9" y="16.1" width="4.4" height="4.2" fill="#94807a"/><rect x="5.9" y="35.5" width="5.8" height="2.3" fill="#a08070"/><rect x="11.3" y="16.9" width="3.4" height="4.6" fill="#c4a89a"/><rect x="13.3" y="40.7" width="3.2" height="4.2" fill="#7a6e66"/><rect x="-0.0" y="57.8" width="6.0" height="2.5" fill="#b0a49c"/><rect x="14.0" y="19.6" width="5.7" height="2.1" fill="#7a6e66"/><rect x="0.2" y="52.9" width="3.8" height="3.2" fill="#8a7a70"/><rect x="3.3" y="57.0" width="5.2" height="2.9" fill="#a07868"/><rect x="14.9" y="5.2" width="5.8" height="3.8" fill="#94807a"/><rect x="8.5" y="7.4" width="3.5" height="2.2" fill="#a07868"/><rect x="8.3" y="27.0" width="5.4" height="4.7" fill="#c4a89a"/><rect x="7.9" y="7.7" width="3.9" height="2.8" fill="#94807a"/><rect x="2.7" y="53.8" width="5.3" height="3.5" fill="#c4a89a"/><rect x="11.0" y="31.1" width="2.7" height="3.4" fill="#b0a49c"/><rect x="16.5" y="39.1" width="3.4" height="4.2" fill="#8a7a70"/><rect x="13.8" y="15.6" width="5.0" height="3.0" fill="#6a625c"/><rect x="15.4" y="53.8" width="3.1" height="4.7" fill="#c4a89a"/><rect x="-0.8" y="30.9" width="4.6" height="3.6" fill="#7a6e66"/><rect x="5.6" y="28.6" width="3.3" height="2.8" fill="#c4a89a"/><rect x="15.7" y="47.2" width="3.4" height="3.8" fill="#c4a89a"/><rect x="16.6" y="25.8" width="5.7" height="2.5" fill="#c4a89a"/><rect x="9.7" y="8.7" width="5.8" height="3.5" fill="#c4a89a"/><rect x="13.0" y="41.2" width="5.7" height="3.3" fill="#94807a"/><rect x="12.5" y="37.5" width="2.7" height="4.2" fill="#94807a"/><rect x="18.8" y="14.8" width="3.2" height="3.5" fill="#8a7a70"/><rect x="13.5" y="9.5" width="2.8" height="3.6" fill="#a08070"/><rect x="9.1" y="12.5" width="4.5" height="2.1" fill="#8a7a70"/><rect x="18.8" y="27.8" width="5.6" height="2.3" fill="#b0a49c"/><rect x="8.1" y="34.9" width="2.1" height="3.3" fill="#a07868"/><rect x="7.7" y="19.3" width="2.8" height="4.0" fill="#7a6e66"/><rect x="13.2" y="30.5" width="5.4" height="4.4" fill="#8a7a70"/><rect x="5.4" y="29.3" width="4.2" height="2.8" fill="#a07868"/><rect x="1.9" y="23.2" width="3.2" height="3.0" fill="#a07868"/><rect x="2.0" y="34.1" width="4.6" height="3.0" fill="#a07868"/><rect x="1.9" y="4.4" width="3.9" height="2.6" fill="#8a7a70"/><rect x="19.6" y="30.9" width="3.5" height="2.9" fill="#c4a89a"/><rect x="7.1" y="23.8" width="4.5" height="4.5" fill="#b89888"/><rect x="14.6" y="21.5" width="4.0" height="3.3" fill="#a08070"/><rect x="20.2" y="28.4" width="4.4" height="2.7" fill="#94807a"/><rect x="6.4" y="52.3" width="2.1" height="4.6" fill="#a08070"/><rect x="12.7" y="25.5" width="3.9" height="2.3" fill="#7a6e66"/><rect x="8.4" y="27.6" width="2.2" height="2.4" fill="#b0a49c"/><rect x="16.9" y="13.1" width="3.1" height="4.6" fill="#7a6e66"/><rect x="4.9" y="27.5" width="5.4" height="4.0" fill="#6a625c"/><rect x="0" y="55" width="13" height="45" fill="#8292a6"/><rect x="8.6" y="92.4" width="4.1" height="4.4" fill="#7a8a9e"/><rect x="4.3" y="70.8" width="5.0" height="2.8" fill="#94a0b0"/><rect x="2.5" y="85.6" width="4.9" height="2.1" fill="#8c9cb0"/><rect x="4.9" y="94.8" width="2.1" height="2.7" fill="#8c9cb0"/><rect x="4.5" y="79.9" width="2.1" height="4.2" fill="#70809a"/><rect x="3.6" y="84.1" width="5.4" height="4.4" fill="#8c9cb0"/><rect x="6.1" y="69.4" width="5.6" height="3.3" fill="#7a8a9e"/><rect x="1.9" y="88.8" width="4.8" height="3.2" fill="#94a0b0"/><rect x="5.8" y="77.2" width="2.6" height="3.3" fill="#94a0b0"/><rect x="4.9" y="59.0" width="4.2" height="3.2" fill="#8c9cb0"/><rect x="-0.2" y="96.3" width="3.1" height="2.2" fill="#94a0b0"/><rect x="9.1" y="84.5" width="4.9" height="4.7" fill="#7a8a9e"/><rect x="6.7" y="91.3" width="2.5" height="2.3" fill="#7a8a9e"/><rect x="2.0" y="95.2" width="4.8" height="2.4" fill="#8c9cb0"/><rect x="8.8" y="59.8" width="2.7" height="2.5" fill="#8c9cb0"/><rect x="3.9" y="60.0" width="2.2" height="2.3" fill="#7a8a9e"/><rect x="0" y="0" width="5" height="40" fill="#5e8e6c"/><rect x="13" y="12" width="7" height="84" fill="#a09a92"/><rect x="5" y="0" width="5" height="58" fill="#b89484"/><rect x="24" y="0" width="76" height="13" fill="#8c7a70"/><rect x="52.6" y="7.0" width="3.7" height="2.2" fill="#8a7a70"/><rect x="67.8" y="5.1" width="3.3" height="2.6" fill="#d0c8c4"/><rect x="75.2" y="0.9" width="3.1" height="2.1" fill="#d0c8c4"/><rect x="92.7" y="5.8" width="4.0" height="2.6" fill="#b89888"/><rect x="42.1" y="7.9" width="2.8" height="3.1" fill="#b0a49c"/><rect x="86.1" y="4.2" width="4.9" height="3.6" fill="#94807a"/><rect x="72.4" y="-0.0" width="2.5" height="3.4" fill="#d0c8c4"/><rect x="61.4" y="4.1" width="2.1" height="3.7" fill="#94807a"/><rect x="46.7" y="8.6" width="4.6" height="3.0" fill="#8a7a70"/><rect x="86.1" y="10.6" width="3.6" height="2.8" fill="#94807a"/><rect x="31.6" y="11.2" width="4.0" height="2.4" fill="#d0c8c4"/><rect x="75.3" y="3.7" width="3.5" height="2.4" fill="#b89888"/><rect x="76.0" y="7.9" width="2.9" height="3.9" fill="#94807a"/><rect x="72.0" y="8.1" width="2.4" height="3.7" fill="#94807a"/><rect x="25.7" y="11.2" width="4.9" height="2.7" fill="#b89888"/><rect x="30.2" y="-0.6" width="4.2" height="2.8" fill="#b89888"/><rect x="93.7" y="6.9" width="2.6" height="3.0" fill="#c4a89a"/><rect x="90.6" y="6.5" width="2.0" height="2.9" fill="#94807a"/><rect x="37.4" y="6.9" width="3.0" height="2.9" fill="#9a8678"/><rect x="88.9" y="0.9" width="3.1" height="2.8" fill="#7a6e66"/><rect x="79.8" y="6.6" width="2.3" height="3.6" fill="#8a7a70"/><rect x="91.9" y="3.8" width="3.4" height="2.1" fill="#8a7a70"/><rect x="57.9" y="10.0" width="4.1" height="3.3" fill="#9a8678"/><rect x="56.4" y="2.0" width="4.4" height="2.6" fill="#a08070"/><rect x="66.6" y="6.6" width="2.1" height="3.4" fill="#a07868"/><rect x="50.2" y="2.4" width="3.2" height="3.9" fill="#6a625c"/><rect x="97.4" y="5.0" width="3.1" height="2.1" fill="#b89888"/><rect x="26.3" y="6.7" width="2.5" height="2.4" fill="#5a5450"/><rect x="27.4" y="9.1" width="4.9" height="2.0" fill="#94807a"/><rect x="86.1" y="9.8" width="2.5" height="2.1" fill="#a07868"/><rect x="28.3" y="10.5" width="3.1" height="2.2" fill="#6a625c"/><rect x="74.7" y="6.8" width="2.3" height="2.9" fill="#6a625c"/><rect x="42.1" y="4.2" width="3.2" height="2.1" fill="#7a6e66"/><rect x="93.4" y="1.2" width="3.9" height="3.8" fill="#5a5450"/><rect x="62.6" y="0.0" width="3.5" height="2.8" fill="#c4a89a"/><rect x="95.5" y="1.1" width="4.4" height="2.2" fill="#9a8678"/><rect x="24.3" y="5.8" width="4.6" height="2.4" fill="#6a625c"/><rect x="62.0" y="0.5" width="3.3" height="3.5" fill="#8a7a70"/><rect x="55.9" y="9.2" width="4.7" height="2.6" fill="#b89888"/><rect x="58.9" y="8.9" width="3.7" height="2.3" fill="#7a6e66"/><rect x="32.5" y="0.0" width="4.5" height="2.6" fill="#b89888"/><rect x="94.5" y="6.6" width="4.1" height="3.6" fill="#7a6e66"/><rect x="26.6" y="1.3" width="2.2" height="3.4" fill="#7a6e66"/><rect x="28.3" y="7.6" width="4.6" height="3.8" fill="#94807a"/><rect x="89.1" y="6.8" width="4.3" height="3.1" fill="#a08070"/><rect x="83.7" y="6.9" width="3.7" height="2.9" fill="#8a7a70"/><rect x="42.8" y="8.4" width="4.2" height="3.4" fill="#94807a"/><rect x="45.8" y="0.7" width="3.7" height="2.6" fill="#6a625c"/><rect x="27.7" y="8.5" width="4.0" height="2.6" fill="#b0a49c"/><rect x="96.6" y="9.5" width="2.1" height="2.2" fill="#94807a"/><rect x="67.9" y="1.6" width="4.6" height="3.9" fill="#94807a"/><rect x="50.1" y="1.1" width="2.4" height="2.4" fill="#a07868"/><rect x="30.0" y="5.1" width="4.5" height="3.5" fill="#a08070"/><rect x="79.7" y="4.5" width="3.9" height="2.3" fill="#94807a"/><rect x="92.2" y="4.7" width="2.4" height="2.6" fill="#94807a"/><rect x="73.4" y="1.1" width="2.5" height="2.1" fill="#6a625c"/><rect x="30.6" y="8.6" width="4.9" height="3.2" fill="#94807a"/><rect x="23.1" y="10.4" width="4.1" height="2.4" fill="#b89888"/><rect x="52.3" y="1.4" width="3.4" height="3.8" fill="#7a6e66"/><rect x="60.9" y="8.5" width="4.5" height="2.6" fill="#b89888"/><rect x="84.0" y="6.5" width="3.1" height="3.6" fill="#8a7a70"/><rect x="33.6" y="9.1" width="3.9" height="2.8" fill="#6a625c"/><rect x="52.7" y="8.7" width="3.1" height="2.2" fill="#7a6e66"/><rect x="81.4" y="3.1" width="4.7" height="2.4" fill="#d0c8c4"/><rect x="29.8" y="1.4" width="3.4" height="3.1" fill="#5a5450"/><rect x="67.6" y="1.2" width="2.0" height="3.0" fill="#94807a"/><rect x="69.3" y="5.0" width="2.1" height="3.4" fill="#b0a49c"/><rect x="52.8" y="10.4" width="3.4" height="3.4" fill="#a07868"/><rect x="72.1" y="5.2" width="4.8" height="3.4" fill="#94807a"/><rect x="73.9" y="5.2" width="3.1" height="3.2" fill="#7a6e66"/><rect x="24" y="13" width="76" height="9" fill="#b4a696"/><rect x="38" y="14" width="20" height="4" fill="#8a6a5a"/><rect x="24" y="22" width="76" height="12" fill="#5c5854"/><rect x="24" y="27" width="76" height="1.200" fill="#7a7670"/><rect x="84" y="28" width="3" height="2" fill="#d8d8d8"/><rect x="24" y="34" width="62" height="6" fill="#a09480"/><rect x="86" y="34" width="14" height="7" fill="#6e6a62"/><rect x="24" y="40" width="76" height="7" fill="#66665c"/><rect x="42" y="44" width="58" height="16" fill="#4a8a32"/><rect x="84.2" y="52.1" width="4.1" height="3.1" fill="#3a7428"/><rect x="41.8" y="54.6" width="4.7" height="5.5" fill="#4a8c34"/><rect x="79.0" y="55.5" width="3.3" height="5.0" fill="#56983a"/><rect x="81.1" y="50.8" width="5.8" height="5.2" fill="#4a8c34"/><rect x="47.7" y="48.0" width="4.9" height="3.2" fill="#62a044"/><rect x="78.1" y="47.7" width="4.7" height="5.5" fill="#3a7428"/><rect x="78.2" y="47.6" width="5.1" height="3.5" fill="#56983a"/><rect x="72.3" y="52.4" width="3.4" height="4.8" fill="#56983a"/><rect x="57.5" y="54.8" width="4.0" height="3.3" fill="#62a044"/><rect x="45.3" y="48.2" width="3.3" height="5.5" fill="#4a8c34"/><rect x="72.7" y="55.3" width="3.9" height="3.2" fill="#62a044"/><rect x="64.0" y="50.4" width="5.9" height="4.1" fill="#4a8c34"/><rect x="74.8" y="56.8" width="4.2" height="3.7" fill="#4a8c34"/><rect x="57.4" y="51.1" width="4.7" height="3.4" fill="#62a044"/><rect x="74.5" y="52.4" width="3.7" height="3.5" fill="#3a7428"/><rect x="94.0" y="45.0" width="4.3" height="3.2" fill="#62a044"/><rect x="86.2" y="52.1" width="6.8" height="3.8" fill="#4a8c34"/><rect x="83.6" y="54.3" width="6.6" height="4.6" fill="#3c7c2a"/><rect x="46.2" y="45.2" width="3.8" height="3.4" fill="#62a044"/><rect x="64.8" y="47.4" width="6.0" height="4.5" fill="#4a8c34"/><rect x="92.8" y="50.9" width="5.9" height="5.4" fill="#3c7c2a"/><rect x="51.9" y="47.2" width="4.5" height="5.1" fill="#4a8c34"/><rect x="82.0" y="44.1" width="4.8" height="4.8" fill="#2e6a22"/><rect x="41.3" y="56.5" width="6.8" height="4.2" fill="#56983a"/><rect x="62.5" y="48.1" width="3.5" height="3.0" fill="#3a7428"/><rect x="81.9" y="46.9" width="3.3" height="5.0" fill="#3c7c2a"/><rect x="81.4" y="45.4" width="6.2" height="5.6" fill="#56983a"/><rect x="68.7" y="52.9" width="4.5" height="3.8" fill="#3c7c2a"/><rect x="59.4" y="55.1" width="5.3" height="3.8" fill="#62a044"/><rect x="95.5" y="46.9" width="4.7" height="3.6" fill="#3a7428"/><rect x="46.4" y="49.8" width="3.3" height="3.7" fill="#4a8c34"/><rect x="92.2" y="44.3" width="5.2" height="4.0" fill="#56983a"/><rect x="87.2" y="45.1" width="3.5" height="3.2" fill="#3c7c2a"/><rect x="95.5" y="54.8" width="3.1" height="4.5" fill="#3c7c2a"/><rect x="96.3" y="49.4" width="3.2" height="3.6" fill="#2e6a22"/><rect x="73.9" y="53.5" width="5.1" height="5.5" fill="#2e6a22"/><rect x="34" y="52" width="38" height="22" fill="#5a8a5e"/><rect x="36" y="54" width="34" height="18" fill="#628e66"/><path d="M53 54v18" stroke="#7aa07e" stroke-width=".8"/><rect x="72" y="60" width="28" height="14" fill="#94786a"/><rect x="81.4" y="69.8" width="3.5" height="2.1" fill="#94807a"/><rect x="87.8" y="66.5" width="4.6" height="3.9" fill="#a07868"/><rect x="92.5" y="64.8" width="2.1" height="2.0" fill="#94807a"/><rect x="96.2" y="69.0" width="4.7" height="2.8" fill="#c4a89a"/><rect x="82.6" y="71.1" width="2.4" height="3.6" fill="#c4a89a"/><rect x="78.4" y="65.2" width="2.7" height="2.8" fill="#7a6e66"/><rect x="92.5" y="68.7" width="2.0" height="3.3" fill="#9a8678"/><rect x="95.9" y="70.7" width="2.2" height="2.8" fill="#b89888"/><rect x="83.9" y="63.0" width="3.9" height="3.5" fill="#6a625c"/><rect x="96.4" y="71.7" width="2.4" height="2.5" fill="#8a7a70"/><rect x="73.4" y="60.6" width="2.0" height="3.6" fill="#c4a89a"/><rect x="78.9" y="71.2" width="3.0" height="2.4" fill="#b0a49c"/><rect x="88.8" y="64.2" width="2.3" height="2.2" fill="#c4a89a"/><rect x="82.2" y="70.2" width="4.7" height="3.1" fill="#a07868"/><rect x="71.3" y="64.4" width="2.4" height="2.0" fill="#b89888"/><rect x="71.2" y="68.7" width="3.4" height="3.4" fill="#94807a"/><rect x="77.4" y="62.9" width="2.7" height="3.4" fill="#b0a49c"/><rect x="95.1" y="68.8" width="2.7" height="3.4" fill="#b0a49c"/><rect x="22" y="48" width="13" height="44" fill="#8a8a88"/><rect x="28.9" y="86.9" width="2.9" height="2.9" fill="#7a7a78"/><rect x="27.6" y="72.8" width="3.7" height="2.6" fill="#a8a4a0"/><rect x="22.7" y="87.4" width="5.0" height="2.6" fill="#8a8a88"/><rect x="23.3" y="74.2" width="3.9" height="2.1" fill="#8a8a88"/><rect x="26.6" y="83.0" width="4.8" height="2.6" fill="#9a9894"/><rect x="21.0" y="71.8" width="3.4" height="2.1" fill="#6e6e6c"/><rect x="22.0" y="62.0" width="3.4" height="2.1" fill="#9a9894"/><rect x="30.7" y="68.0" width="3.1" height="2.7" fill="#9a9894"/><rect x="29.9" y="74.2" width="4.2" height="2.5" fill="#a8a4a0"/><rect x="29.8" y="72.1" width="2.5" height="3.6" fill="#a8a4a0"/><rect x="27.1" y="70.9" width="4.7" height="3.7" fill="#b8b4b0"/><rect x="26.4" y="77.4" width="3.1" height="2.2" fill="#6e6e6c"/><rect x="21.5" y="71.9" width="3.5" height="3.7" fill="#8a8a88"/><rect x="26.2" y="71.8" width="3.2" height="3.1" fill="#6e6e6c"/><rect x="21.7" y="76.9" width="4.8" height="2.2" fill="#8a8a88"/><rect x="24.9" y="69.3" width="2.1" height="3.4" fill="#6e6e6c"/><rect x="28.0" y="84.0" width="4.2" height="2.1" fill="#8a8a88"/><rect x="26.3" y="60.0" width="3.2" height="2.6" fill="#7a7a78"/><rect x="26.3" y="53.6" width="3.5" height="3.8" fill="#9a9894"/><rect x="27.2" y="66.8" width="4.8" height="2.6" fill="#9a9894"/><rect x="26.1" y="74.3" width="3.1" height="2.2" fill="#b8b4b0"/><rect x="31.8" y="54.4" width="3.2" height="2.4" fill="#6e6e6c"/><rect x="31.6" y="53.2" width="3.3" height="3.1" fill="#7a7a78"/><rect x="31.8" y="56.3" width="3.7" height="3.0" fill="#9a9894"/><rect x="30" y="74" width="36" height="26" fill="#8e8a86"/><rect x="55.7" y="94.0" width="4.0" height="2.8" fill="#6e6e6c"/><rect x="43.5" y="94.7" width="3.9" height="2.4" fill="#6e6e6c"/><rect x="32.0" y="93.0" width="3.5" height="3.4" fill="#9a9894"/><rect x="51.1" y="94.8" width="3.0" height="2.2" fill="#7a7a78"/><rect x="42.8" y="88.3" width="2.1" height="3.9" fill="#6e6e6c"/><rect x="60.5" y="80.6" width="2.3" height="3.7" fill="#6e6e6c"/><rect x="58.4" y="74.6" width="4.2" height="2.8" fill="#6e6e6c"/><rect x="32.4" y="92.1" width="2.2" height="2.1" fill="#dcd8d4"/><rect x="37.1" y="73.7" width="2.3" height="2.8" fill="#6e6e6c"/><rect x="40.0" y="81.9" width="4.0" height="3.4" fill="#9a9894"/><rect x="55.6" y="76.0" width="3.4" height="2.2" fill="#9a9894"/><rect x="48.4" y="83.5" width="2.3" height="4.0" fill="#6e6e6c"/><rect x="57.8" y="74.0" width="2.9" height="2.9" fill="#7a7a78"/><rect x="61.0" y="81.1" width="3.1" height="3.3" fill="#9a9894"/><rect x="62.4" y="85.1" width="2.4" height="2.1" fill="#dcd8d4"/><rect x="50.8" y="79.2" width="3.7" height="3.6" fill="#7a7a78"/><rect x="44.9" y="92.3" width="4.2" height="2.5" fill="#9a9894"/><rect x="53.7" y="91.7" width="2.4" height="2.4" fill="#9a9894"/><rect x="37.7" y="89.4" width="3.3" height="2.5" fill="#dcd8d4"/><rect x="52.8" y="93.1" width="2.8" height="2.9" fill="#dcd8d4"/><rect x="38.0" y="81.8" width="2.3" height="3.2" fill="#8a8a88"/><rect x="36.1" y="73.6" width="3.6" height="3.1" fill="#dcd8d4"/><rect x="58.8" y="96.0" width="3.9" height="3.0" fill="#6e6e6c"/><rect x="38.9" y="86.6" width="3.8" height="2.1" fill="#6e6e6c"/><rect x="33.5" y="88.8" width="3.2" height="4.0" fill="#8a8a88"/><rect x="40.2" y="93.6" width="2.0" height="3.9" fill="#6e6e6c"/><rect x="52.5" y="81.3" width="3.3" height="3.7" fill="#b8b4b0"/><rect x="56.0" y="76.9" width="4.1" height="3.2" fill="#dcd8d4"/><rect x="45.4" y="84.6" width="4.0" height="3.1" fill="#b8b4b0"/><rect x="46.2" y="76.0" width="2.1" height="3.1" fill="#a8a4a0"/><rect x="47.0" y="90.1" width="2.5" height="2.3" fill="#dcd8d4"/><rect x="51.0" y="78.8" width="4.0" height="2.8" fill="#6e6e6c"/><rect x="36.8" y="74.7" width="4.8" height="2.4" fill="#b8b4b0"/><rect x="54.5" y="82.5" width="3.3" height="2.6" fill="#dcd8d4"/><rect x="59.0" y="86.0" width="4.4" height="3.5" fill="#8a8a88"/><rect x="29.5" y="92.8" width="2.4" height="2.1" fill="#9a9894"/><rect x="60.9" y="84.4" width="2.5" height="3.8" fill="#6e6e6c"/><rect x="56.4" y="92.9" width="3.6" height="2.0" fill="#dcd8d4"/><rect x="53.0" y="94.1" width="4.5" height="3.2" fill="#a8a4a0"/><rect x="64.6" y="77.9" width="2.1" height="3.8" fill="#9a9894"/><rect x="47.1" y="95.7" width="4.1" height="2.4" fill="#7a7a78"/><rect x="44.1" y="80.8" width="2.7" height="2.0" fill="#dcd8d4"/><rect x="33.0" y="82.4" width="3.2" height="3.5" fill="#a8a4a0"/><rect x="44.9" y="83.3" width="2.7" height="2.8" fill="#8a8a88"/><rect x="64" y="74" width="36" height="26" fill="#3c7a2a"/><rect x="69.8" y="89.3" width="4.1" height="4.4" fill="#3a7428"/><rect x="70.9" y="83.5" width="4.1" height="3.2" fill="#2e6a22"/><rect x="80.8" y="91.7" width="6.3" height="5.3" fill="#3a7428"/><rect x="73.9" y="79.1" width="4.8" height="3.5" fill="#3a7428"/><rect x="88.9" y="97.1" width="6.5" height="3.1" fill="#4a8c34"/><rect x="83.3" y="82.0" width="4.5" height="3.2" fill="#4a8c34"/><rect x="80.7" y="90.3" width="5.5" height="3.5" fill="#3c7c2a"/><rect x="77.9" y="92.2" width="6.0" height="4.8" fill="#56983a"/><rect x="78.7" y="81.3" width="5.9" height="5.3" fill="#3c7c2a"/><rect x="91.4" y="79.4" width="5.9" height="4.0" fill="#62a044"/><rect x="83.2" y="85.1" width="4.8" height="5.4" fill="#4a8c34"/><rect x="95.7" y="73.4" width="4.6" height="4.5" fill="#2e6a22"/><rect x="65.4" y="85.3" width="4.2" height="5.1" fill="#4a8c34"/><rect x="73.9" y="74.9" width="3.3" height="4.7" fill="#56983a"/><rect x="91.6" y="91.8" width="4.6" height="3.8" fill="#56983a"/><rect x="93.1" y="93.5" width="5.5" height="5.0" fill="#3a7428"/><rect x="65.7" y="84.3" width="6.5" height="4.8" fill="#2e6a22"/><rect x="77.5" y="87.9" width="3.9" height="3.8" fill="#62a044"/><rect x="71.5" y="79.7" width="3.3" height="4.8" fill="#3c7c2a"/><rect x="75.3" y="83.3" width="5.4" height="3.2" fill="#4a8c34"/><rect x="66.0" y="80.7" width="4.4" height="5.5" fill="#4a8c34"/><rect x="73.9" y="93.5" width="4.4" height="3.3" fill="#2e6a22"/><rect x="78.3" y="93.2" width="4.3" height="4.8" fill="#3c7c2a"/><rect x="73.1" y="83.4" width="5.4" height="5.3" fill="#62a044"/><rect x="66.1" y="85.1" width="5.1" height="4.3" fill="#2e6a22"/><rect x="87.3" y="95.9" width="4.7" height="3.5" fill="#3c7c2a"/><rect x="93.3" y="80.3" width="3.5" height="4.1" fill="#56983a"/><rect x="66.6" y="73.2" width="4.7" height="5.4" fill="#4a8c34"/><rect x="66.5" y="91.8" width="5.9" height="3.1" fill="#3c7c2a"/><rect x="84.8" y="80.1" width="3.3" height="3.2" fill="#3a7428"/><rect x="73.1" y="89.6" width="3.9" height="4.1" fill="#62a044"/><rect x="90.5" y="92.9" width="5.8" height="4.3" fill="#62a044"/><rect x="75.1" y="97.8" width="4.9" height="3.1" fill="#62a044"/><rect x="72.5" y="95.0" width="3.4" height="4.1" fill="#56983a"/><rect x="75.2" y="92.3" width="6.8" height="5.4" fill="#56983a"/><rect x="88.1" y="83.6" width="3.5" height="4.9" fill="#56983a"/><rect x="16" y="88" width="20" height="12" fill="#b0a8a8"/><rect x="26" y="90" width="8" height="8" fill="#d8d4d0"/><rect x="74" y="64" width="8" height="5" fill="#5a6a9a"/></g></g></svg>
<div class="a" style="left:606px;top:367px;width:346px;height:1px;background:#c8c4b0"></div><div class="a" style="left:606px;top:368px;width:346px;height:1px;background:#fff"></div>
<div class="t tah" style="left:608px;top:371px;font-size:11.3px;" id="pv1">專案: 640x480x32, 30.000p</div>
<div class="t tah" style="left:608px;top:384px;font-size:11.3px;">預覽: 640x480x32, 30.000p</div>
<div class="t tah" style="left:780px;top:371px;font-size:11.3px;">畫格: 60</div>
<div class="t tah" style="left:780px;top:384px;font-size:11.3px;">顯示: <span style="color:#a01820">320x240x32</span></div>
<!-- timeline -->
<div class="a" style="left:0;top:397px;width:960px;height:2px;background:#f8f6ee"></div>
<div class="a" style="left:0;top:400px;width:942px;height:1px;background:#bcb8a6"></div>
<div class="a" style="left:9px;top:407px;width:3px;height:3px;background:#5a6a8a;border-radius:1px;box-shadow:1px 1px 0 #fff"></div>
<div class="a" style="left:9px;top:412px;width:3px;height:3px;background:#5a6a8a;border-radius:1px;box-shadow:1px 1px 0 #fff"></div>
<div class="a" style="left:9px;top:417px;width:3px;height:3px;background:#5a6a8a;border-radius:1px;box-shadow:1px 1px 0 #fff"></div>
<div class="a" style="left:9px;top:422px;width:3px;height:3px;background:#5a6a8a;border-radius:1px;box-shadow:1px 1px 0 #fff"></div>
<div class="a" style="left:9px;top:427px;width:3px;height:3px;background:#5a6a8a;border-radius:1px;box-shadow:1px 1px 0 #fff"></div>
<div class="t tah" style="left:135px;top:417.500px;font-size:18.6px;color:#6c6a5c" id="bigtc">00:00:09;29</div>
<div class="a" style="left:246px;top:400px;width:1px;height:245px;background:#c0bca8"></div>
<div class="a" style="left:247px;top:400px;width:1px;height:245px;background:#f8f6ee"></div>
<div class="a" style="left:248px;top:568px;width:694px;height:60px;background:#c9c5b4"></div>
<div class="a" style="left:248px;top:449px;width:273px;height:179px;background:#8aa2c4"></div>
<div class="a" style="left:521px;top:508px;width:421px;height:1px;background:#9a968a"></div>
<div class="a" style="left:521px;top:567px;width:421px;height:1px;background:#aeaa9a"></div>
<div class="a" style="left:248px;top:423px;width:273px;height:8px;background:#b4b09c"></div>
<svg style="left:248px;top:423px" width="280" height="10" viewBox="0 0 280 10"><path d="M0 0h8L0 8z" fill="#f4e020"/><path d="M273 0h-8l8 8z" fill="#f4e020"/></svg>
<div class="a" style="left:248px;top:430px;width:693px;height:1px;background:#b4b09c"></div>
<div class="a" style="left:248px;top:448px;width:693px;height:1px;background:#8c8a7e"></div>
<svg style="left:0;top:0" width="960" height="720"><path d="M274.7 445v3M302.0 445v3M329.2 445v3M356.5 445v3M383.7 441v7M410.9 445v3M438.2 445v3M465.4 445v3M492.7 445v3M519.9 441v7M547.1 445v3M574.4 445v3M601.6 445v3M628.9 445v3M656.1 441v7M683.3 445v3M710.6 445v3M737.8 445v3M765.1 445v3M792.3 441v7M819.5 445v3M846.8 445v3M874.0 445v3M901.3 445v3M928.5 441v7" stroke="#222" stroke-width="1"/><path d="M656.1 449v179M792.3 449v179M928.5 449v179" stroke="#3a3a34" stroke-width="1" stroke-dasharray="1 3"/><path d="M383.500 449v179" stroke="#c8d4e8" stroke-width="1" stroke-dasharray="1 3" opacity=".7"/></svg>
<div class="a" style="left:248px;top:432px;width:692px;height:16px;overflow:hidden">
<div class="t tah" style="left:1px;top:4px;font-size:10px;color:#111">00:00:00;00</div>
<div class="t tah" style="left:137px;top:4px;font-size:10px;color:#111">00:00:05;00</div>
<div class="t tah" style="left:273px;top:4px;font-size:10px;color:#111">00:00:10;00</div>
<div class="t tah" style="left:409px;top:4px;font-size:10px;color:#111">00:00:15;00</div>
<div class="t tah" style="left:545px;top:4px;font-size:10px;color:#111">00:00:19;29</div>
<div class="t tah" style="left:681px;top:4px;font-size:10px;color:#111">00:00:25;00</div>
</div>
<div class="a" style="left:487px;top:402px;width:32px;height:13px;background:#fffef4;border:1px solid #33331f;box-shadow:inset 0 0 0 .5px #555"></div>
<div class="t tah" style="left:491px;top:403px;font-size:10px;">-0;07</div>
<svg style="left:520px;top:402px" width="9" height="9" viewBox="0 0 9 9"><path d="M1 1v7" stroke="#2a6ab8" stroke-width="1.200"/><path d="M8 4.500H3M5 2L2.500 4.500 5 7" stroke="#2a6ab8" stroke-width="1.300" fill="none"/></svg>
<div class="a" style="left:248px;top:452px;width:272px;height:54px;background:#fff"></div>
<div class="a" style="left:248px;top:452px;width:92px;height:54px;background:#eeede6"></div>
<div class="a" style="left:421px;top:452px;width:99px;height:54px;background:#eeede6"></div>
<svg style="left:248px;top:449px" width="274" height="60" viewBox="248 449 274 60"><defs><filter id="b2" x="-5%" y="-5%" width="110%" height="110%"><feGaussianBlur stdDeviation="0.7"/></filter><clipPath id="c1"><rect x="250" y="453.500" width="75" height="50"/></clipPath><clipPath id="c2"><rect x="347" y="453.500" width="73" height="50"/></clipPath><clipPath id="c3"><rect x="444" y="453.500" width="75" height="50"/></clipPath></defs><g clip-path="url(#c1)"><rect x="250" y="453" width="75" height="51" fill="#84766c"/><g filter="url(#b2)"><rect x="289.8" y="461.0" width="2.9" height="2.7" fill="#c4b0a8"/><rect x="283.5" y="461.6" width="4.1" height="1.9" fill="#947c70"/><rect x="262.1" y="453.8" width="3.9" height="1.7" fill="#8a7a70"/><rect x="268.8" y="466.5" width="3.3" height="2.3" fill="#7a6e66"/><rect x="251.8" y="452.7" width="3.4" height="3.2" fill="#a89488"/><rect x="263.3" y="463.1" width="3.3" height="3.1" fill="#a89488"/><rect x="271.0" y="464.7" width="3.1" height="2.8" fill="#5e5a54"/><rect x="273.0" y="470.3" width="3.5" height="2.4" fill="#9a8678"/><rect x="259.0" y="457.7" width="3.6" height="2.2" fill="#9a8678"/><rect x="253.7" y="457.9" width="3.2" height="1.7" fill="#9a8678"/><rect x="249.0" y="455.9" width="4.4" height="3.3" fill="#8a7a70"/><rect x="266.5" y="453.3" width="2.9" height="3.6" fill="#a89488"/><rect x="252.8" y="458.6" width="3.8" height="2.1" fill="#8c8078"/><rect x="259.7" y="454.0" width="3.8" height="1.7" fill="#8a7a70"/><rect x="279.1" y="455.7" width="2.9" height="2.5" fill="#c4b0a8"/><rect x="254.9" y="464.2" width="2.1" height="3.0" fill="#9a8678"/><rect x="249.0" y="467.9" width="2.7" height="3.6" fill="#947c70"/><rect x="258.4" y="459.3" width="2.4" height="3.4" fill="#947c70"/><rect x="292.1" y="456.3" width="3.4" height="1.7" fill="#6a625c"/><rect x="286.8" y="459.4" width="1.5" height="2.8" fill="#9a8678"/><rect x="260.0" y="463.6" width="1.8" height="2.7" fill="#b8a49a"/><rect x="274.6" y="468.8" width="3.4" height="1.8" fill="#7a6e66"/><rect x="255.6" y="470.3" width="4.1" height="1.9" fill="#947c70"/><rect x="282.1" y="470.9" width="2.2" height="1.9" fill="#a89488"/><rect x="270.0" y="453.5" width="3.6" height="2.3" fill="#8a7a70"/><rect x="292.5" y="456.9" width="1.8" height="1.6" fill="#8c8078"/><rect x="275.7" y="457.5" width="2.3" height="3.2" fill="#7a6e66"/><rect x="254.4" y="460.8" width="4.3" height="3.6" fill="#947c70"/><rect x="289.0" y="456.1" width="3.3" height="2.1" fill="#8a7a70"/><rect x="260.3" y="452.9" width="1.7" height="2.4" fill="#6a625c"/><rect x="254.8" y="459.0" width="2.6" height="2.7" fill="#5e5a54"/><rect x="278.4" y="463.2" width="4.4" height="2.9" fill="#7a6e66"/><rect x="269.8" y="458.6" width="3.3" height="3.4" fill="#6a625c"/><rect x="276.1" y="461.9" width="4.4" height="1.5" fill="#6a625c"/><rect x="252.4" y="462.0" width="2.5" height="3.6" fill="#8a7a70"/><rect x="279.1" y="467.0" width="4.2" height="3.0" fill="#b8a49a"/><rect x="289.0" y="468.6" width="2.6" height="2.9" fill="#8c8078"/><rect x="270.3" y="452.3" width="4.3" height="1.6" fill="#8c8078"/><rect x="252.2" y="453.9" width="2.6" height="1.5" fill="#9a8678"/><rect x="280.0" y="459.2" width="4.5" height="3.3" fill="#947c70"/><rect x="272.9" y="462.1" width="2.9" height="2.5" fill="#c4b0a8"/><rect x="270.8" y="456.4" width="1.6" height="2.8" fill="#9a8678"/><rect x="289.5" y="456.9" width="3.0" height="2.8" fill="#8a7a70"/><rect x="276.2" y="462.5" width="2.6" height="1.8" fill="#b8a49a"/><rect x="287.8" y="458.4" width="3.5" height="2.4" fill="#6a625c"/><rect x="285.2" y="469.9" width="2.1" height="2.4" fill="#a89488"/><rect x="263.0" y="454.6" width="2.7" height="2.7" fill="#5e5a54"/><rect x="250.8" y="453.2" width="2.6" height="3.4" fill="#6a625c"/><rect x="269.3" y="470.8" width="4.0" height="1.7" fill="#8c8078"/><rect x="278.8" y="465.9" width="2.6" height="2.6" fill="#947c70"/><rect x="250.4" y="469.8" width="2.9" height="1.7" fill="#8a7a70"/><rect x="264.4" y="464.9" width="3.5" height="2.1" fill="#947c70"/><rect x="269.7" y="452.5" width="1.6" height="1.8" fill="#6a625c"/><rect x="251.1" y="464.7" width="2.2" height="1.8" fill="#5e5a54"/><rect x="277.9" y="459.1" width="1.8" height="2.6" fill="#9a8678"/><rect x="269.6" y="455.6" width="3.6" height="1.9" fill="#8a7a70"/><rect x="250.6" y="456.4" width="3.8" height="2.6" fill="#b8a49a"/><rect x="271.0" y="470.5" width="3.1" height="3.5" fill="#7a6e66"/><rect x="289.2" y="453.6" width="2.7" height="3.2" fill="#8c8078"/><rect x="277.2" y="469.8" width="1.9" height="2.5" fill="#8c8078"/><rect x="271.0" y="467.7" width="3.2" height="2.9" fill="#b8a49a"/><rect x="258.0" y="465.8" width="2.9" height="2.9" fill="#9a8678"/><rect x="293.0" y="470.2" width="2.1" height="3.4" fill="#c4b0a8"/><rect x="260.1" y="465.3" width="4.4" height="3.5" fill="#8a7a70"/><rect x="268.6" y="463.2" width="2.5" height="1.7" fill="#6a625c"/><rect x="284.6" y="453.3" width="3.0" height="1.6" fill="#8a7a70"/><rect x="284.4" y="454.8" width="2.0" height="2.2" fill="#7a6e66"/><rect x="271.0" y="464.6" width="4.5" height="3.4" fill="#5e5a54"/><rect x="289.5" y="453.7" width="4.3" height="2.5" fill="#a89488"/><rect x="285.7" y="462.9" width="2.8" height="2.7" fill="#7a6e66"/><rect x="273.6" y="457.8" width="3.1" height="3.3" fill="#8c8078"/><rect x="275.0" y="457.7" width="4.4" height="3.3" fill="#7a6e66"/><rect x="273.4" y="455.9" width="4.4" height="2.6" fill="#c4b0a8"/><rect x="266.0" y="463.0" width="1.8" height="1.5" fill="#8a7a70"/><rect x="284.2" y="463.1" width="3.0" height="2.3" fill="#5e5a54"/><rect x="291.1" y="461.2" width="1.8" height="1.9" fill="#8c8078"/><rect x="254.7" y="460.5" width="2.3" height="2.5" fill="#5e5a54"/><rect x="267.4" y="452.6" width="3.1" height="1.7" fill="#6a625c"/><rect x="250.0" y="455.7" width="1.9" height="3.1" fill="#a89488"/><rect x="281.9" y="456.9" width="1.5" height="2.1" fill="#5e5a54"/><rect x="254.5" y="461.7" width="1.8" height="3.0" fill="#6a625c"/><rect x="287.1" y="452.4" width="3.7" height="3.0" fill="#8c8078"/><rect x="272.2" y="468.6" width="4.0" height="2.8" fill="#c4b0a8"/><rect x="286.1" y="463.9" width="3.4" height="2.6" fill="#7a6e66"/><rect x="285.3" y="469.1" width="2.2" height="3.1" fill="#b8a49a"/><rect x="257.5" y="466.5" width="3.3" height="3.4" fill="#a89488"/><rect x="259.3" y="466.7" width="4.2" height="1.8" fill="#6a625c"/><rect x="290.7" y="462.6" width="2.7" height="2.4" fill="#7a6e66"/><rect x="284.9" y="453.8" width="2.1" height="2.8" fill="#947c70"/><rect x="291.1" y="454.1" width="3.5" height="3.4" fill="#c4b0a8"/><rect x="295" y="453" width="17" height="20" fill="#c4b4b2"/><rect x="310.7" y="469.1" width="2.3" height="1.5" fill="#d8ccca"/><rect x="307.0" y="464.9" width="2.0" height="1.0" fill="#cfc0bc"/><rect x="296.0" y="455.6" width="2.0" height="1.3" fill="#b8a4a4"/><rect x="295.5" y="453.2" width="3.0" height="2.3" fill="#a89898"/><rect x="301.0" y="460.9" width="1.2" height="1.1" fill="#e4dcd8"/><rect x="294.2" y="466.1" width="1.9" height="1.8" fill="#b8a4a4"/><rect x="307.0" y="460.3" width="1.4" height="1.6" fill="#b8a4a4"/><rect x="307.3" y="458.8" width="2.2" height="1.1" fill="#d8ccca"/><rect x="308.1" y="464.6" width="2.6" height="2.0" fill="#a89898"/><rect x="303.9" y="459.1" width="2.1" height="1.3" fill="#e4dcd8"/><rect x="307.0" y="455.3" width="1.6" height="1.2" fill="#a89898"/><rect x="303.6" y="459.6" width="1.3" height="1.5" fill="#a89898"/><rect x="305.9" y="453.4" width="2.5" height="1.6" fill="#e4dcd8"/><rect x="309.4" y="472.7" width="1.6" height="1.1" fill="#cfc0bc"/><rect x="311.2" y="458.2" width="1.1" height="1.4" fill="#b8a4a4"/><rect x="302.9" y="459.9" width="2.3" height="1.8" fill="#a89898"/><rect x="306.7" y="471.6" width="2.3" height="2.0" fill="#d8ccca"/><rect x="298.2" y="461.2" width="1.2" height="1.2" fill="#cfc0bc"/><rect x="300.7" y="454.0" width="1.1" height="1.3" fill="#e4dcd8"/><rect x="303.4" y="460.5" width="1.6" height="1.5" fill="#cfc0bc"/><rect x="304.8" y="467.9" width="2.1" height="2.4" fill="#d8ccca"/><rect x="310.1" y="459.8" width="2.1" height="1.9" fill="#b8a4a4"/><rect x="308.7" y="462.6" width="1.8" height="2.4" fill="#cfc0bc"/><rect x="301.5" y="462.4" width="1.1" height="2.3" fill="#cfc0bc"/><rect x="302.4" y="457.5" width="1.6" height="1.7" fill="#e4dcd8"/><rect x="294.4" y="467.4" width="2.3" height="2.0" fill="#cfc0bc"/><rect x="307.5" y="460.1" width="1.1" height="1.2" fill="#e4dcd8"/><rect x="310.3" y="471.8" width="2.5" height="1.1" fill="#d8ccca"/><rect x="305.8" y="457.2" width="2.6" height="1.3" fill="#b8a4a4"/><rect x="308.5" y="471.0" width="1.1" height="1.1" fill="#b8a4a4"/><rect x="312" y="453" width="13" height="20" fill="#6a6a4c"/><rect x="318.0" y="454.2" width="3.5" height="2.6" fill="#c0a898"/><rect x="321.9" y="459.3" width="2.3" height="1.7" fill="#7a7258"/><rect x="319.9" y="461.1" width="1.7" height="2.1" fill="#b09a8a"/><rect x="315.4" y="466.6" width="2.8" height="2.4" fill="#7a7258"/><rect x="313.8" y="454.2" width="3.4" height="2.5" fill="#b09a8a"/><rect x="315.3" y="457.3" width="3.1" height="2.3" fill="#3e5a2c"/><rect x="313.3" y="457.5" width="3.0" height="2.4" fill="#7a7258"/><rect x="323.9" y="470.5" width="1.9" height="1.8" fill="#3e5a2c"/><rect x="314.6" y="460.7" width="1.6" height="1.6" fill="#c0a898"/><rect x="314.7" y="467.3" width="1.6" height="1.8" fill="#3e5a2c"/><rect x="323.9" y="461.8" width="1.8" height="1.8" fill="#b09a8a"/><rect x="320.7" y="468.8" width="1.9" height="1.9" fill="#4a6a34"/><rect x="320.8" y="468.7" width="3.1" height="2.1" fill="#7a7258"/><rect x="315.9" y="454.9" width="2.4" height="2.5" fill="#7a7258"/><rect x="315.0" y="462.5" width="2.8" height="2.8" fill="#3e5a2c"/><rect x="318.7" y="463.8" width="3.2" height="1.7" fill="#5a5a40"/><rect x="312.0" y="463.5" width="3.3" height="1.6" fill="#5a5a40"/><rect x="320.8" y="452.2" width="3.1" height="2.1" fill="#b09a8a"/><rect x="312.1" y="458.0" width="1.9" height="2.4" fill="#3e5a2c"/><rect x="321.6" y="456.4" width="3.0" height="1.9" fill="#3e5a2c"/><rect x="312.4" y="466.2" width="3.0" height="2.0" fill="#c0a898"/><rect x="319.5" y="457.4" width="2.7" height="2.7" fill="#c0a898"/><rect x="314.8" y="460.0" width="3.1" height="1.9" fill="#3e5a2c"/><rect x="315.2" y="459.4" width="3.3" height="1.8" fill="#b09a8a"/><rect x="320.7" y="466.6" width="2.9" height="2.3" fill="#b09a8a"/><rect x="321.0" y="463.1" width="3.1" height="2.2" fill="#7a7258"/><rect x="322.4" y="468.2" width="1.7" height="2.1" fill="#7a7258"/><rect x="318.1" y="471.1" width="2.5" height="2.2" fill="#3e5a2c"/><path d="M250 486h22l10 18h-32z" fill="#383a3e"/><path d="M272 486h32l-6 18h-16z" fill="#4a7a32"/><rect x="288.0" y="490.4" width="3.6" height="2.2" fill="#2e5a20"/><rect x="292.9" y="501.5" width="1.7" height="1.6" fill="#3c6c28"/><rect x="277.4" y="499.2" width="1.6" height="2.6" fill="#6a9a48"/><rect x="293.3" y="494.5" width="2.1" height="1.9" fill="#6a9a48"/><rect x="297.8" y="497.1" width="2.5" height="2.1" fill="#6a9a48"/><rect x="276.7" y="495.6" width="2.7" height="2.9" fill="#3c6c28"/><rect x="290.7" y="499.6" width="2.5" height="2.9" fill="#6a9a48"/><rect x="296.5" y="495.9" width="3.6" height="3.0" fill="#2e5a20"/><rect x="277.6" y="502.1" width="2.4" height="1.5" fill="#5a8a3c"/><rect x="290.2" y="497.5" width="2.1" height="1.8" fill="#4a7a32"/><rect x="282.0" y="502.2" width="2.0" height="2.2" fill="#3c6c28"/><rect x="282.1" y="487.7" width="2.7" height="2.7" fill="#5a8a3c"/><rect x="275.4" y="493.3" width="3.8" height="2.8" fill="#3c6c28"/><rect x="283.5" y="495.7" width="2.3" height="1.8" fill="#2e5a20"/><rect x="280.1" y="488.2" width="3.3" height="2.5" fill="#4a7a32"/><rect x="297.0" y="495.6" width="2.5" height="3.0" fill="#2e5a20"/><rect x="295.7" y="501.5" width="2.7" height="1.9" fill="#4a7a32"/><rect x="277.1" y="499.8" width="3.2" height="2.8" fill="#6a9a48"/><rect x="294.5" y="491.5" width="1.6" height="3.1" fill="#2e5a20"/><rect x="292.7" y="486.0" width="3.5" height="2.8" fill="#5a8a3c"/><rect x="295.2" y="492.7" width="3.7" height="3.0" fill="#5a8a3c"/><rect x="278.6" y="487.7" width="3.3" height="2.5" fill="#4a7a32"/><rect x="294.6" y="487.2" width="1.9" height="3.0" fill="#7a8a5a"/><rect x="286.8" y="487.7" width="4.0" height="2.0" fill="#5a8a3c"/><rect x="295.7" y="499.1" width="1.5" height="2.9" fill="#3c6c28"/><rect x="287.5" y="500.5" width="2.4" height="2.5" fill="#7a8a5a"/><rect x="288.7" y="499.5" width="2.7" height="3.1" fill="#4a7a32"/><rect x="279.7" y="497.4" width="1.5" height="1.8" fill="#6a9a48"/><rect x="287.6" y="487.8" width="2.0" height="2.4" fill="#4a7a32"/><rect x="288.2" y="502.8" width="2.3" height="2.2" fill="#7a8a5a"/><path d="M272 486h3l11 18h-4z" fill="#a89078"/><path d="M298 486h8l14 18h-10z" fill="#a09088"/><path d="M306 486h19v18h-5z" fill="#5e5a52"/><rect x="318.0" y="486.5" width="2.9" height="2.0" fill="#3e3e3a"/><rect x="319.7" y="486.6" width="2.9" height="2.5" fill="#3e3e3a"/><rect x="319.4" y="488.3" width="1.5" height="2.0" fill="#8a8276"/><rect x="321.8" y="496.4" width="1.7" height="2.5" fill="#58704a"/><rect x="312.0" y="490.2" width="1.9" height="2.3" fill="#8a8276"/><rect x="319.1" y="492.4" width="3.0" height="2.7" fill="#4a4a44"/><rect x="319.4" y="489.7" width="2.0" height="1.8" fill="#7a7468"/><rect x="312.4" y="496.2" width="2.6" height="2.4" fill="#4a4a44"/><rect x="309.3" y="493.6" width="1.7" height="2.3" fill="#6a665e"/><rect x="321.3" y="493.3" width="1.9" height="2.0" fill="#4a4a44"/><rect x="324.1" y="491.3" width="1.7" height="1.5" fill="#4a4a44"/><rect x="322.6" y="486.9" width="2.2" height="2.6" fill="#6a665e"/><rect x="313.2" y="489.5" width="3.0" height="2.6" fill="#3e3e3a"/><rect x="317.0" y="489.3" width="2.7" height="2.4" fill="#6a665e"/><rect x="307.3" y="489.5" width="2.8" height="2.3" fill="#7a7468"/><rect x="316.4" y="487.9" width="2.1" height="2.1" fill="#7a7468"/><rect x="316.7" y="487.1" width="3.1" height="2.6" fill="#8a8276"/><rect x="312.5" y="491.9" width="3.3" height="2.2" fill="#6a665e"/><rect x="322.3" y="499.2" width="2.6" height="1.8" fill="#58704a"/><rect x="322.0" y="493.9" width="3.2" height="1.8" fill="#6a665e"/><rect x="314.6" y="491.0" width="3.1" height="1.7" fill="#7a7468"/><rect x="313.1" y="491.2" width="2.2" height="2.7" fill="#4a4a44"/><rect x="311.0" y="492.7" width="2.4" height="2.4" fill="#8a8276"/><rect x="311.3" y="497.5" width="2.6" height="2.2" fill="#7a7468"/><rect x="320.4" y="489.1" width="2.7" height="1.7" fill="#7a7468"/><rect x="321.1" y="487.6" width="2.0" height="2.2" fill="#8a8276"/><rect x="313.4" y="495.9" width="3.1" height="2.1" fill="#58704a"/><rect x="321.6" y="497.3" width="1.8" height="2.5" fill="#8a8276"/><rect x="307.3" y="487.7" width="2.7" height="2.5" fill="#3e3e3a"/><rect x="309.1" y="490.6" width="1.6" height="2.2" fill="#7a7468"/><rect x="283" y="486" width="5" height="3" fill="#e0e0d8"/></g></g><g clip-path="url(#c2)"><rect x="347" y="453" width="73" height="51" fill="#94806f"/><g filter="url(#b2)"><rect x="386.9" y="468.9" width="3.1" height="2.1" fill="#9a8678"/><rect x="374.8" y="476.8" width="3.7" height="3.2" fill="#a89488"/><rect x="391.0" y="486.9" width="2.9" height="2.4" fill="#c09a80"/><rect x="416.9" y="494.3" width="3.8" height="2.5" fill="#c09a80"/><rect x="354.1" y="500.1" width="4.0" height="1.7" fill="#a08268"/><rect x="411.0" y="468.2" width="3.1" height="2.4" fill="#9a8678"/><rect x="377.5" y="470.9" width="2.4" height="2.8" fill="#a08268"/><rect x="388.3" y="455.6" width="3.8" height="2.1" fill="#a89488"/><rect x="408.0" y="501.6" width="4.0" height="2.0" fill="#d0ac98"/><rect x="363.1" y="467.4" width="3.6" height="2.6" fill="#946e58"/><rect x="416.6" y="488.3" width="4.3" height="3.3" fill="#b08a6c"/><rect x="403.1" y="463.2" width="4.1" height="2.4" fill="#c09a80"/><rect x="353.1" y="491.3" width="3.2" height="3.4" fill="#a89488"/><rect x="378.1" y="466.9" width="4.1" height="2.7" fill="#947c70"/><rect x="378.4" y="475.0" width="1.6" height="1.9" fill="#7a6658"/><rect x="388.3" y="454.3" width="2.7" height="2.2" fill="#8a7a70"/><rect x="369.4" y="459.3" width="2.9" height="2.2" fill="#d0ac98"/><rect x="406.9" y="487.4" width="4.1" height="1.9" fill="#9a8678"/><rect x="371.8" y="475.5" width="2.1" height="3.3" fill="#b8a49a"/><rect x="386.1" y="478.7" width="3.4" height="3.0" fill="#5e5a54"/><rect x="349.6" y="457.3" width="2.1" height="3.3" fill="#a08268"/><rect x="375.7" y="496.8" width="4.4" height="2.1" fill="#a08268"/><rect x="377.8" y="455.9" width="3.6" height="3.5" fill="#5e5a54"/><rect x="395.0" y="465.8" width="4.1" height="1.8" fill="#5e5a54"/><rect x="365.7" y="492.9" width="3.0" height="2.1" fill="#7a6658"/><rect x="362.2" y="467.1" width="4.2" height="2.7" fill="#b8a49a"/><rect x="391.8" y="456.6" width="3.5" height="2.1" fill="#7a6e66"/><rect x="384.3" y="454.3" width="2.8" height="2.6" fill="#a47a62"/><rect x="404.4" y="456.4" width="2.4" height="2.0" fill="#947c70"/><rect x="358.6" y="489.5" width="4.5" height="1.9" fill="#8a7a70"/><rect x="418.0" y="453.7" width="2.1" height="3.4" fill="#8a7464"/><rect x="346.2" y="496.8" width="4.2" height="2.7" fill="#9a8678"/><rect x="393.1" y="470.1" width="2.0" height="2.7" fill="#d0ac98"/><rect x="382.0" y="494.6" width="3.8" height="2.6" fill="#7a6658"/><rect x="388.3" y="490.9" width="3.7" height="2.6" fill="#a89488"/><rect x="377.6" y="491.4" width="3.3" height="2.0" fill="#5e5a54"/><rect x="408.0" y="482.4" width="2.3" height="2.6" fill="#c4b0a8"/><rect x="398.5" y="480.8" width="1.6" height="2.8" fill="#b8a49a"/><rect x="390.1" y="492.5" width="2.5" height="2.8" fill="#7a6658"/><rect x="403.6" y="455.7" width="2.8" height="2.1" fill="#b8a49a"/><rect x="402.8" y="464.0" width="3.2" height="2.6" fill="#6a625c"/><rect x="397.0" y="493.5" width="1.7" height="2.4" fill="#7a6658"/><rect x="381.5" y="484.4" width="3.8" height="3.1" fill="#7a6658"/><rect x="357.7" y="487.2" width="2.0" height="2.0" fill="#8a7464"/><rect x="372.7" y="463.0" width="1.7" height="2.4" fill="#9a8678"/><rect x="389.9" y="458.7" width="1.9" height="3.1" fill="#8a7464"/><rect x="346.2" y="472.3" width="3.1" height="3.6" fill="#7a6658"/><rect x="367.8" y="473.5" width="1.9" height="2.3" fill="#7a6e66"/><rect x="396.6" y="500.9" width="4.4" height="2.9" fill="#5e5a54"/><rect x="408.1" y="473.4" width="2.4" height="1.7" fill="#7a6e66"/><rect x="369.8" y="501.8" width="4.3" height="2.3" fill="#8c8078"/><rect x="393.7" y="455.0" width="1.6" height="2.3" fill="#a08268"/><rect x="409.5" y="497.8" width="3.2" height="3.4" fill="#b8a49a"/><rect x="406.8" y="471.3" width="2.9" height="2.3" fill="#9a8678"/><rect x="359.4" y="479.9" width="2.1" height="2.2" fill="#b8a49a"/><rect x="388.8" y="490.5" width="2.9" height="2.3" fill="#d0ac98"/><rect x="395.0" y="494.6" width="2.8" height="3.6" fill="#8c8078"/><rect x="349.4" y="466.0" width="3.1" height="2.4" fill="#c4b0a8"/><rect x="399.1" y="477.8" width="3.4" height="2.6" fill="#a47a62"/><rect x="365.0" y="470.1" width="4.3" height="3.0" fill="#6a625c"/><rect x="355.8" y="464.0" width="3.7" height="3.1" fill="#a89488"/><rect x="374.2" y="456.2" width="1.6" height="2.2" fill="#946e58"/><rect x="383.7" y="454.7" width="2.5" height="3.1" fill="#946e58"/><rect x="359.5" y="477.9" width="3.3" height="2.5" fill="#6a625c"/><rect x="377.1" y="479.7" width="1.6" height="2.2" fill="#6a625c"/><rect x="368.6" y="474.7" width="3.1" height="2.7" fill="#946e58"/><rect x="366.5" y="488.4" width="1.9" height="1.9" fill="#946e58"/><rect x="372.0" y="457.2" width="1.9" height="2.6" fill="#b08a6c"/><rect x="348.9" y="453.3" width="2.5" height="2.0" fill="#d0ac98"/><rect x="416.1" y="466.8" width="3.2" height="3.2" fill="#7a6e66"/><rect x="394.8" y="486.0" width="4.3" height="2.0" fill="#b08a6c"/><rect x="352.5" y="473.5" width="2.2" height="2.8" fill="#946e58"/><rect x="413.0" y="466.4" width="3.0" height="2.5" fill="#c4b0a8"/><rect x="360.7" y="490.1" width="2.2" height="3.4" fill="#b08a6c"/><rect x="352.7" y="469.4" width="3.5" height="2.0" fill="#c09a80"/><rect x="364.3" y="495.1" width="3.9" height="2.5" fill="#947c70"/><rect x="373.9" y="470.7" width="3.6" height="1.5" fill="#7a6e66"/><rect x="372.7" y="495.1" width="4.2" height="2.1" fill="#947c70"/><rect x="364.3" y="453.2" width="2.9" height="2.2" fill="#b08a6c"/><rect x="367.6" y="493.3" width="2.5" height="2.3" fill="#b8a49a"/><rect x="370.4" y="497.5" width="3.4" height="2.3" fill="#8a7a70"/><rect x="401.4" y="483.1" width="3.2" height="3.5" fill="#b8907a"/><rect x="366.0" y="494.0" width="2.7" height="2.4" fill="#8a7464"/><rect x="348.8" y="458.7" width="2.6" height="3.4" fill="#7a6658"/><rect x="380.4" y="453.1" width="2.3" height="2.5" fill="#8c8078"/><rect x="362.0" y="478.5" width="2.3" height="2.0" fill="#b8907a"/><rect x="384.6" y="495.7" width="4.4" height="1.5" fill="#b8907a"/><rect x="410.8" y="486.4" width="1.7" height="3.2" fill="#a08268"/><rect x="347.4" y="493.3" width="2.3" height="1.7" fill="#8c8078"/><rect x="414.8" y="493.3" width="3.6" height="2.9" fill="#b8a49a"/><rect x="404.4" y="466.7" width="2.5" height="2.9" fill="#c09a80"/><rect x="384.8" y="463.8" width="2.4" height="3.1" fill="#5e5a54"/><rect x="412.4" y="488.9" width="2.6" height="3.0" fill="#7a6e66"/><rect x="408.5" y="467.4" width="4.5" height="3.2" fill="#8a7464"/><rect x="348.9" y="483.1" width="3.0" height="2.9" fill="#c09a80"/><rect x="364.0" y="478.1" width="4.1" height="1.6" fill="#946e58"/><rect x="372.7" y="486.3" width="2.3" height="2.8" fill="#b8a49a"/><rect x="407.1" y="493.3" width="2.5" height="3.1" fill="#a47a62"/><rect x="354.9" y="489.1" width="4.5" height="2.8" fill="#c4b0a8"/><rect x="372.8" y="486.3" width="3.9" height="1.8" fill="#5e5a54"/><rect x="379.8" y="486.3" width="3.5" height="3.5" fill="#6a625c"/><rect x="364.3" y="485.9" width="2.3" height="2.1" fill="#946e58"/><rect x="349.4" y="487.3" width="4.3" height="3.6" fill="#a89488"/><rect x="371.3" y="479.5" width="4.1" height="1.9" fill="#a89488"/><rect x="406.2" y="494.4" width="2.7" height="3.4" fill="#b8a49a"/><rect x="403.9" y="494.6" width="2.6" height="2.1" fill="#947c70"/><rect x="375.7" y="459.1" width="2.2" height="3.0" fill="#a47a62"/><rect x="385.5" y="492.0" width="2.7" height="3.0" fill="#6a625c"/><rect x="386.1" y="496.6" width="2.8" height="3.3" fill="#d0ac98"/><rect x="409.9" y="465.8" width="2.8" height="1.8" fill="#a47a62"/><rect x="366.0" y="463.4" width="1.9" height="2.8" fill="#d0ac98"/><rect x="386.7" y="459.6" width="2.1" height="2.7" fill="#8a7a70"/><rect x="351.6" y="461.3" width="4.2" height="2.1" fill="#d0ac98"/><rect x="418.5" y="472.4" width="1.9" height="3.2" fill="#9a8678"/><rect x="374.6" y="454.9" width="2.7" height="3.2" fill="#b8907a"/><rect x="364.1" y="461.4" width="3.4" height="3.2" fill="#947c70"/><rect x="377.4" y="493.2" width="4.1" height="3.6" fill="#9a8678"/><rect x="358.3" y="458.1" width="2.0" height="1.6" fill="#7a6e66"/><rect x="386.4" y="455.2" width="2.3" height="1.6" fill="#8a7464"/><rect x="416.5" y="452.6" width="1.5" height="1.9" fill="#7a6658"/><rect x="413.2" y="477.2" width="2.3" height="2.0" fill="#947c70"/><rect x="400.6" y="501.1" width="3.9" height="3.2" fill="#a89488"/><rect x="405.4" y="472.6" width="4.3" height="2.5" fill="#8a7a70"/><rect x="369.8" y="489.1" width="1.5" height="1.8" fill="#7a6658"/><rect x="372.1" y="483.8" width="3.5" height="3.2" fill="#b08a6c"/><rect x="393.4" y="482.5" width="2.4" height="1.6" fill="#c4b0a8"/><rect x="361.3" y="489.1" width="2.5" height="3.1" fill="#b8907a"/><rect x="371.2" y="459.9" width="2.4" height="1.9" fill="#b08a6c"/><rect x="346.7" y="477.4" width="2.6" height="2.4" fill="#946e58"/><rect x="407.5" y="489.7" width="1.8" height="3.5" fill="#8a7a70"/><rect x="399.4" y="457.5" width="4.1" height="2.2" fill="#a08268"/><rect x="361.9" y="472.2" width="2.8" height="3.5" fill="#b8a49a"/><rect x="373.7" y="499.3" width="3.9" height="1.6" fill="#b8a49a"/><rect x="346.7" y="488.8" width="3.8" height="2.6" fill="#946e58"/><rect x="389.6" y="469.7" width="4.2" height="1.6" fill="#8a7464"/><rect x="381.8" y="480.5" width="4.1" height="2.8" fill="#a89488"/><rect x="400.4" y="473.8" width="1.9" height="3.1" fill="#8a7464"/><rect x="362.6" y="482.4" width="2.8" height="2.3" fill="#a47a62"/><rect x="384.8" y="474.4" width="1.6" height="3.4" fill="#947c70"/><rect x="412.8" y="459.6" width="3.3" height="2.7" fill="#8a7464"/><rect x="391.2" y="461.6" width="2.5" height="2.0" fill="#d0ac98"/><rect x="407.2" y="458.4" width="4.5" height="2.3" fill="#d0ac98"/><rect x="413.6" y="492.4" width="1.8" height="1.9" fill="#6a625c"/><rect x="382.3" y="501.5" width="4.0" height="3.2" fill="#7a6e66"/><rect x="371.0" y="478.6" width="2.1" height="1.6" fill="#b08a6c"/><rect x="408.4" y="461.9" width="2.9" height="2.6" fill="#c4b0a8"/><rect x="353.6" y="474.5" width="4.4" height="2.0" fill="#d0ac98"/><rect x="381.2" y="454.9" width="4.1" height="1.7" fill="#b8907a"/><rect x="412.5" y="493.7" width="4.4" height="1.6" fill="#b8a49a"/><rect x="371.3" y="496.5" width="1.8" height="1.6" fill="#947c70"/><rect x="374.4" y="495.4" width="1.9" height="1.9" fill="#8a7464"/><rect x="415.9" y="462.6" width="4.2" height="1.7" fill="#a08268"/><rect x="360.0" y="485.4" width="4.1" height="3.0" fill="#c09a80"/><rect x="396.6" y="494.1" width="2.6" height="3.2" fill="#c4b0a8"/><rect x="361.0" y="491.1" width="3.5" height="1.9" fill="#b8a49a"/><rect x="355.2" y="457.9" width="3.6" height="2.5" fill="#b08a6c"/><rect x="360.1" y="502.5" width="3.3" height="2.3" fill="#8c8078"/><rect x="368.1" y="472.7" width="3.7" height="2.3" fill="#6a625c"/><rect x="373.5" y="483.2" width="1.7" height="2.1" fill="#c4b0a8"/><rect x="413.9" y="469.5" width="2.9" height="2.6" fill="#c09a80"/><rect x="366.7" y="495.9" width="2.2" height="2.7" fill="#947c70"/><rect x="391.8" y="463.6" width="4.4" height="1.7" fill="#d0ac98"/><rect x="389.5" y="474.4" width="2.7" height="3.1" fill="#7a6e66"/><rect x="388.3" y="485.5" width="2.6" height="2.2" fill="#c4b0a8"/><rect x="394.8" y="464.2" width="2.4" height="3.0" fill="#c09a80"/><rect x="408.7" y="471.5" width="2.6" height="2.7" fill="#c4b0a8"/><rect x="407.6" y="481.4" width="2.5" height="3.2" fill="#b8907a"/><rect x="361.0" y="491.9" width="3.5" height="2.5" fill="#8a7a70"/><rect x="394.4" y="469.2" width="2.6" height="3.0" fill="#8a7a70"/><rect x="351.2" y="460.7" width="3.5" height="1.8" fill="#7a6658"/><rect x="389.9" y="500.6" width="2.4" height="2.9" fill="#8a7a70"/><rect x="404.4" y="484.9" width="4.5" height="2.3" fill="#a89488"/><rect x="378.6" y="472.6" width="4.5" height="1.6" fill="#8c8078"/><rect x="381.8" y="493.7" width="3.1" height="2.7" fill="#7a6658"/><rect x="352.0" y="460.3" width="2.7" height="3.1" fill="#c4b0a8"/><rect x="379.9" y="495.7" width="3.5" height="3.5" fill="#c09a80"/><rect x="408.0" y="500.6" width="2.9" height="1.5" fill="#8a7a70"/><rect x="387.1" y="501.3" width="1.8" height="2.4" fill="#a89488"/><rect x="355.0" y="480.6" width="2.4" height="2.6" fill="#6a625c"/><rect x="368.1" y="469.8" width="3.5" height="2.6" fill="#5e5a54"/><rect x="350.0" y="463.0" width="2.2" height="2.4" fill="#8a7464"/><rect x="356.0" y="498.1" width="2.0" height="1.7" fill="#7a6658"/><rect x="384.3" y="472.1" width="2.0" height="3.5" fill="#a89488"/><rect x="357.1" y="494.1" width="2.7" height="1.5" fill="#946e58"/><rect x="348.1" y="457.6" width="2.0" height="2.6" fill="#947c70"/><rect x="400.0" y="491.1" width="4.2" height="2.6" fill="#946e58"/><rect x="364.8" y="457.7" width="2.7" height="1.7" fill="#c09a80"/><rect x="393.4" y="496.8" width="2.5" height="2.5" fill="#6a625c"/><rect x="410.9" y="471.9" width="3.2" height="2.6" fill="#947c70"/><rect x="362.0" y="456.2" width="2.3" height="2.8" fill="#d0ac98"/><rect x="370.2" y="457.9" width="2.7" height="2.9" fill="#947c70"/><rect x="383.5" y="480.1" width="4.0" height="1.6" fill="#946e58"/><rect x="396.7" y="453.6" width="4.0" height="2.9" fill="#b08a6c"/><rect x="400.0" y="476.9" width="3.0" height="2.0" fill="#8a7a70"/><rect x="353.6" y="486.6" width="2.6" height="2.7" fill="#b08a6c"/><rect x="388.2" y="470.7" width="4.4" height="2.3" fill="#947c70"/><rect x="350.1" y="461.2" width="2.1" height="3.1" fill="#a89488"/><rect x="349.8" y="456.6" width="3.0" height="3.1" fill="#c4b0a8"/><rect x="413.7" y="484.2" width="3.3" height="3.2" fill="#b08a6c"/><rect x="395.2" y="456.4" width="2.7" height="2.1" fill="#5e5a54"/><rect x="368.5" y="493.6" width="4.0" height="2.2" fill="#947c70"/><rect x="400.7" y="454.5" width="3.4" height="1.6" fill="#7a6e66"/><rect x="391.9" y="453.1" width="3.2" height="3.4" fill="#8c8078"/><rect x="398.9" y="473.5" width="3.2" height="1.5" fill="#7a6e66"/><rect x="396.0" y="459.2" width="2.0" height="1.7" fill="#8a7464"/><rect x="377.8" y="496.7" width="3.5" height="3.2" fill="#7a6e66"/><rect x="371.3" y="493.2" width="4.0" height="3.5" fill="#a89488"/><rect x="395.3" y="485.1" width="3.6" height="2.3" fill="#a89488"/><rect x="375.3" y="479.4" width="4.3" height="1.9" fill="#a89488"/><rect x="375.8" y="497.7" width="2.0" height="2.1" fill="#946e58"/><rect x="382.0" y="473.8" width="2.1" height="3.0" fill="#946e58"/><rect x="385.5" y="495.2" width="3.0" height="2.5" fill="#a47a62"/><rect x="405.7" y="485.5" width="2.5" height="1.5" fill="#946e58"/><rect x="373.9" y="480.9" width="3.3" height="2.6" fill="#8a7464"/><rect x="380.8" y="501.3" width="2.6" height="2.7" fill="#a08268"/><rect x="392.3" y="469.7" width="1.8" height="2.5" fill="#c09a80"/><rect x="350.6" y="494.0" width="3.2" height="2.0" fill="#946e58"/><rect x="412.1" y="455.3" width="2.2" height="1.9" fill="#b8a49a"/><rect x="378.2" y="476.1" width="4.4" height="3.4" fill="#5e5a54"/><rect x="395.6" y="477.1" width="2.1" height="2.8" fill="#6a625c"/><rect x="387.7" y="479.6" width="1.6" height="3.0" fill="#a08268"/><rect x="415.9" y="470.0" width="3.0" height="2.4" fill="#947c70"/><rect x="362.0" y="461.9" width="1.8" height="3.1" fill="#b8907a"/><rect x="357.6" y="461.7" width="3.7" height="2.2" fill="#b8a49a"/><rect x="394.8" y="470.0" width="4.2" height="3.4" fill="#947c70"/><rect x="416.4" y="457.5" width="3.3" height="3.2" fill="#b08a6c"/><rect x="364.6" y="466.8" width="1.6" height="2.6" fill="#c4b0a8"/><rect x="351.4" y="453.5" width="3.2" height="2.1" fill="#c4b0a8"/><rect x="373.5" y="494.1" width="4.3" height="1.8" fill="#b8907a"/><rect x="384.6" y="488.9" width="4.1" height="2.8" fill="#b8907a"/><rect x="388.0" y="483.9" width="3.8" height="3.0" fill="#947c70"/><rect x="372.6" y="491.0" width="1.7" height="3.5" fill="#5e5a54"/><rect x="370.9" y="462.8" width="2.9" height="2.9" fill="#7a6658"/><rect x="410.4" y="455.8" width="2.3" height="3.0" fill="#b8907a"/><rect x="394.1" y="455.6" width="1.8" height="3.5" fill="#8a7a70"/><rect x="354.8" y="501.8" width="1.8" height="2.7" fill="#947c70"/><rect x="414.8" y="486.0" width="2.6" height="1.8" fill="#6a625c"/><rect x="418.1" y="486.5" width="1.6" height="2.7" fill="#7a6658"/><rect x="394.8" y="456.4" width="3.1" height="2.4" fill="#b08a6c"/><rect x="409.0" y="457.0" width="3.3" height="3.4" fill="#6a625c"/><rect x="381.1" y="480.6" width="3.0" height="1.7" fill="#b8907a"/><rect x="364.8" y="462.9" width="1.8" height="3.4" fill="#c4b0a8"/><rect x="413.1" y="497.8" width="4.3" height="3.5" fill="#c09a80"/><rect x="380.6" y="482.4" width="4.3" height="1.5" fill="#a47a62"/><rect x="412.9" y="456.3" width="3.3" height="2.8" fill="#7a6658"/><rect x="354.0" y="466.8" width="2.0" height="3.4" fill="#947c70"/><rect x="348.3" y="494.7" width="4.4" height="1.6" fill="#7a6658"/><rect x="393.6" y="456.1" width="4.0" height="3.1" fill="#b08a6c"/><rect x="417.5" y="493.5" width="1.7" height="3.2" fill="#c09a80"/><rect x="374.4" y="497.9" width="2.6" height="2.0" fill="#5e5a54"/><rect x="384.3" y="468.9" width="2.3" height="2.7" fill="#b08a6c"/><rect x="409.6" y="461.0" width="2.9" height="2.0" fill="#6a625c"/><rect x="362.1" y="498.4" width="2.1" height="2.4" fill="#b8a49a"/><rect x="364.9" y="478.2" width="2.2" height="2.9" fill="#c4b0a8"/><rect x="368.3" y="455.4" width="3.2" height="1.5" fill="#7a6658"/><rect x="394.9" y="491.5" width="2.5" height="3.0" fill="#b8907a"/><rect x="382.9" y="474.1" width="1.8" height="2.9" fill="#9a8678"/><rect x="372.8" y="469.6" width="2.7" height="3.6" fill="#7a6e66"/><rect x="355.6" y="492.0" width="4.5" height="2.3" fill="#5e5a54"/><rect x="373.5" y="466.3" width="2.5" height="3.2" fill="#a47a62"/><path d="M347 455h30l-14 14-16 8z" fill="#6c7c8c"/><path d="M347 458h22l-10 9-12 6z" fill="#7888a0"/><path d="M377 454l4 1-16 16-18 8v-3l16-8z" fill="#586c40"/><path d="M388 470l32-11v4l-30 11z" fill="#d0b0a6"/><path d="M352 480l36-9 2 3-38 10z" fill="#b89080"/><rect x="389" y="453" width="16" height="9" fill="#b08468"/><rect x="378" y="472" width="12" height="4.500" fill="#4e8040"/><rect x="399" y="478" width="7" height="8" fill="#4a7a38"/><rect x="384" y="462" width="8" height="3" fill="#5a8048"/><rect x="377" y="490" width="5" height="14" fill="#6a4a44"/><rect x="371" y="488" width="4" height="16" fill="#8a8478"/><rect x="366" y="498" width="5" height="6" fill="#5a7a40"/><path d="M402 494h18v10h-20z" fill="#c4d0e4"/><rect x="406" y="497" width="10" height="5" fill="#e0e8f4"/></g></g><g clip-path="url(#c3)"><rect x="444" y="453" width="75" height="51" fill="#94806f"/><g filter="url(#b2)"><rect x="513.8" y="470.6" width="4.3" height="1.6" fill="#a08268"/><rect x="447.8" y="470.0" width="3.0" height="2.3" fill="#946e58"/><rect x="480.1" y="456.6" width="1.7" height="1.8" fill="#d0ac98"/><rect x="453.6" y="465.3" width="2.5" height="3.5" fill="#a08268"/><rect x="493.8" y="469.8" width="2.1" height="1.8" fill="#b8907a"/><rect x="511.7" y="454.8" width="2.6" height="3.0" fill="#b08a6c"/><rect x="492.1" y="454.3" width="4.5" height="3.0" fill="#d0ac98"/><rect x="482.5" y="462.9" width="2.0" height="1.8" fill="#b8907a"/><rect x="512.3" y="453.6" width="3.8" height="2.6" fill="#c09a80"/><rect x="516.6" y="469.3" width="1.5" height="3.4" fill="#a47a62"/><rect x="490.8" y="453.9" width="2.1" height="3.5" fill="#b8907a"/><rect x="476.6" y="463.1" width="3.9" height="3.5" fill="#b8907a"/><rect x="513.0" y="471.7" width="2.9" height="1.9" fill="#a08268"/><rect x="483.3" y="457.4" width="2.8" height="2.7" fill="#a08268"/><rect x="458.9" y="452.4" width="2.0" height="3.0" fill="#c09a80"/><rect x="488.4" y="453.2" width="2.8" height="3.5" fill="#a08268"/><rect x="465.8" y="452.9" width="2.0" height="1.5" fill="#8a7464"/><rect x="493.2" y="456.8" width="4.0" height="2.7" fill="#d0ac98"/><rect x="486.4" y="464.4" width="2.0" height="1.8" fill="#7a6658"/><rect x="467.6" y="469.8" width="3.1" height="2.5" fill="#c09a80"/><rect x="508.5" y="464.6" width="3.5" height="2.8" fill="#b8907a"/><rect x="464.4" y="455.2" width="3.0" height="3.6" fill="#d0ac98"/><rect x="454.8" y="470.3" width="2.2" height="2.7" fill="#8a7464"/><rect x="443.2" y="461.2" width="3.4" height="2.8" fill="#b08a6c"/><rect x="481.1" y="459.0" width="3.0" height="3.4" fill="#a08268"/><rect x="479.6" y="468.6" width="3.5" height="2.3" fill="#b8907a"/><rect x="491.2" y="453.2" width="1.7" height="2.2" fill="#946e58"/><rect x="475.1" y="453.7" width="4.4" height="2.1" fill="#a08268"/><rect x="502.7" y="456.8" width="2.2" height="3.2" fill="#a47a62"/><rect x="447.4" y="453.4" width="1.8" height="2.2" fill="#b8907a"/><rect x="493.0" y="462.0" width="2.0" height="2.2" fill="#c09a80"/><rect x="475.8" y="457.7" width="3.4" height="2.9" fill="#946e58"/><rect x="495.3" y="467.2" width="3.6" height="3.2" fill="#946e58"/><rect x="496.7" y="452.9" width="1.9" height="2.5" fill="#a08268"/><rect x="477.2" y="464.3" width="4.4" height="2.9" fill="#7a6658"/><rect x="447.7" y="464.8" width="4.3" height="2.9" fill="#b08a6c"/><rect x="472.1" y="457.1" width="2.3" height="2.1" fill="#8a7464"/><rect x="452.1" y="465.9" width="4.5" height="2.8" fill="#a08268"/><rect x="472.3" y="466.8" width="2.8" height="2.4" fill="#a08268"/><rect x="490.2" y="461.1" width="3.2" height="3.5" fill="#7a6658"/><rect x="507.8" y="462.2" width="3.6" height="1.6" fill="#c09a80"/><rect x="451.8" y="454.9" width="2.2" height="2.8" fill="#7a6658"/><rect x="457.0" y="464.9" width="2.4" height="2.1" fill="#b08a6c"/><rect x="510.9" y="457.4" width="2.5" height="3.4" fill="#8a7464"/><rect x="467.2" y="457.3" width="4.4" height="3.1" fill="#a47a62"/><rect x="450.0" y="466.4" width="4.5" height="1.6" fill="#a08268"/><rect x="461.5" y="455.8" width="2.9" height="3.1" fill="#d0ac98"/><rect x="448.2" y="453.0" width="2.2" height="2.2" fill="#d0ac98"/><rect x="506.9" y="461.9" width="2.4" height="3.3" fill="#c09a80"/><rect x="478.2" y="471.2" width="2.7" height="2.0" fill="#b08a6c"/><rect x="473.9" y="464.3" width="2.8" height="2.5" fill="#a47a62"/><rect x="482.4" y="471.9" width="4.2" height="2.0" fill="#a47a62"/><rect x="517.3" y="464.4" width="1.8" height="1.9" fill="#946e58"/><rect x="496.1" y="466.5" width="3.2" height="2.1" fill="#d0ac98"/><rect x="446.1" y="453.1" width="2.3" height="3.2" fill="#a08268"/><rect x="478.2" y="471.4" width="2.8" height="1.7" fill="#a08268"/><rect x="477.3" y="464.6" width="3.2" height="1.5" fill="#946e58"/><rect x="499.9" y="456.8" width="4.5" height="2.5" fill="#c09a80"/><rect x="446.4" y="465.6" width="3.5" height="2.8" fill="#946e58"/><rect x="473.1" y="459.4" width="2.2" height="2.7" fill="#7a6658"/><rect x="458.2" y="456.7" width="3.7" height="2.8" fill="#b8907a"/><rect x="510.2" y="463.9" width="4.5" height="3.3" fill="#d0ac98"/><rect x="507.6" y="462.2" width="2.4" height="2.0" fill="#7a6658"/><rect x="457.0" y="452.6" width="3.7" height="3.3" fill="#b08a6c"/><rect x="469.8" y="460.5" width="3.6" height="2.4" fill="#b8907a"/><rect x="444.7" y="469.5" width="2.8" height="1.9" fill="#b08a6c"/><rect x="508.2" y="460.9" width="2.9" height="2.5" fill="#7a6658"/><rect x="501.8" y="470.1" width="3.5" height="2.6" fill="#b08a6c"/><rect x="496.1" y="470.9" width="3.7" height="2.1" fill="#b8907a"/><rect x="459.8" y="466.7" width="2.8" height="2.9" fill="#a47a62"/><rect x="484.5" y="459.4" width="3.3" height="3.0" fill="#7a6658"/><rect x="449.7" y="459.4" width="2.5" height="2.4" fill="#7a6658"/><rect x="498.8" y="460.0" width="2.4" height="3.5" fill="#b8907a"/><rect x="504.8" y="459.3" width="3.2" height="3.2" fill="#d0ac98"/><rect x="461.4" y="465.6" width="3.7" height="2.7" fill="#a47a62"/><rect x="444.9" y="467.2" width="2.7" height="1.8" fill="#d0ac98"/><rect x="444.6" y="466.7" width="3.9" height="2.6" fill="#d0ac98"/><rect x="455.3" y="464.2" width="3.1" height="2.5" fill="#b8907a"/><rect x="502.3" y="460.4" width="3.5" height="2.1" fill="#946e58"/><rect x="477.8" y="463.4" width="1.8" height="1.6" fill="#b8907a"/><rect x="469.0" y="466.0" width="3.2" height="3.5" fill="#b08a6c"/><rect x="455.7" y="459.0" width="1.5" height="2.6" fill="#c09a80"/><rect x="469.7" y="462.7" width="2.6" height="2.1" fill="#a08268"/><rect x="472.9" y="467.5" width="3.1" height="2.3" fill="#c09a80"/><rect x="511.2" y="465.0" width="2.1" height="1.6" fill="#a08268"/><rect x="478.8" y="465.9" width="3.7" height="2.1" fill="#a08268"/><rect x="467.3" y="464.4" width="3.5" height="2.1" fill="#d0ac98"/><rect x="507.5" y="456.3" width="3.6" height="2.2" fill="#b8907a"/><rect x="510.3" y="468.1" width="3.6" height="1.6" fill="#8a7464"/><rect x="459.5" y="456.1" width="3.3" height="3.6" fill="#d0ac98"/><rect x="468.6" y="460.1" width="2.0" height="3.5" fill="#7a6658"/><rect x="487.4" y="467.4" width="2.0" height="1.9" fill="#b8907a"/><rect x="459.1" y="468.8" width="2.6" height="3.0" fill="#c09a80"/><rect x="479.5" y="465.6" width="2.9" height="1.6" fill="#b08a6c"/><rect x="511.9" y="452.5" width="3.8" height="2.9" fill="#d0ac98"/><rect x="517.2" y="463.9" width="1.6" height="2.2" fill="#7a6658"/><rect x="444.6" y="466.1" width="1.7" height="1.7" fill="#946e58"/><rect x="454.3" y="465.8" width="3.2" height="1.6" fill="#a08268"/><rect x="484.6" y="459.1" width="2.9" height="2.1" fill="#d0ac98"/><rect x="465.6" y="452.3" width="1.5" height="3.4" fill="#d0ac98"/><rect x="463.0" y="454.2" width="2.4" height="2.7" fill="#b08a6c"/><rect x="466.1" y="469.2" width="2.9" height="2.6" fill="#b8907a"/><rect x="473.3" y="459.6" width="3.6" height="2.6" fill="#a47a62"/><rect x="486.0" y="471.5" width="2.3" height="2.4" fill="#c09a80"/><rect x="472.2" y="464.9" width="2.4" height="2.1" fill="#a08268"/><rect x="457.1" y="469.3" width="3.4" height="2.1" fill="#a47a62"/><rect x="497.7" y="460.7" width="3.6" height="3.0" fill="#7a6658"/><rect x="485.9" y="465.1" width="3.0" height="2.0" fill="#c09a80"/><rect x="516.1" y="462.9" width="1.7" height="2.0" fill="#a47a62"/><rect x="464.4" y="459.3" width="3.2" height="1.6" fill="#b08a6c"/><rect x="507.0" y="468.2" width="3.1" height="1.7" fill="#b08a6c"/><rect x="509.4" y="462.9" width="2.8" height="3.6" fill="#a47a62"/><rect x="455.8" y="460.9" width="3.3" height="2.7" fill="#c09a80"/><rect x="475.8" y="462.9" width="3.5" height="2.0" fill="#d0ac98"/><rect x="487.6" y="452.2" width="4.5" height="3.4" fill="#c09a80"/><rect x="465.9" y="455.5" width="3.3" height="2.0" fill="#a47a62"/><rect x="456.6" y="455.5" width="3.1" height="3.6" fill="#c09a80"/><rect x="445.5" y="468.3" width="3.8" height="1.6" fill="#946e58"/><rect x="497.1" y="469.0" width="3.9" height="2.8" fill="#d0ac98"/><rect x="497.2" y="457.9" width="3.9" height="3.4" fill="#b08a6c"/><rect x="446.2" y="462.4" width="3.3" height="3.5" fill="#7a6658"/><rect x="471.2" y="464.4" width="4.1" height="2.9" fill="#7a6658"/><rect x="460.8" y="457.2" width="3.0" height="3.5" fill="#c09a80"/><rect x="456.7" y="456.8" width="3.5" height="1.6" fill="#8a7464"/><rect x="451.7" y="464.1" width="4.3" height="2.9" fill="#7a6658"/><rect x="443.5" y="460.1" width="4.3" height="2.2" fill="#7a6658"/><rect x="451.8" y="459.2" width="1.9" height="2.0" fill="#d0ac98"/><rect x="512.6" y="464.7" width="3.2" height="2.3" fill="#946e58"/><rect x="492.3" y="465.2" width="2.1" height="1.5" fill="#c09a80"/><rect x="446.2" y="462.6" width="2.8" height="2.5" fill="#a08268"/><path d="M444 467l22-3 20 3 33-4v3l-33 4-20-3-22 5z" fill="#788488"/><path d="M456 466l14-2 10 2" stroke="#5a7a44" stroke-width="1.500" fill="none"/><rect x="484" y="453" width="12" height="9" fill="#dcc8c0"/><rect x="497" y="455" width="9" height="6" fill="#c07850"/><path d="M444 486h14l-6 18h-8z" fill="#3e3e3a"/><path d="M458 486h6l-7 18h-6z" fill="#54803a"/><rect x="462" y="486" width="32" height="18" fill="#86847e"/><rect x="468.2" y="492.7" width="1.9" height="2.3" fill="#a8a49c"/><rect x="482.9" y="485.9" width="3.7" height="3.1" fill="#7a7872"/><rect x="462.2" y="485.5" width="1.9" height="1.8" fill="#a8a49c"/><rect x="465.4" y="490.8" width="1.9" height="3.0" fill="#7a7872"/><rect x="466.5" y="493.1" width="3.3" height="2.0" fill="#a8a49c"/><rect x="466.4" y="487.9" width="2.1" height="2.8" fill="#8a7a70"/><rect x="472.4" y="498.2" width="3.9" height="2.4" fill="#7a7872"/><rect x="462.2" y="495.8" width="2.7" height="2.5" fill="#94908a"/><rect x="473.7" y="498.0" width="3.9" height="3.5" fill="#a8a49c"/><rect x="482.0" y="487.9" width="2.4" height="2.1" fill="#6a6862"/><rect x="480.4" y="489.8" width="4.3" height="1.7" fill="#6a6862"/><rect x="485.8" y="496.8" width="2.4" height="3.1" fill="#94908a"/><rect x="471.5" y="489.2" width="3.4" height="3.3" fill="#8a7a70"/><rect x="486.6" y="491.1" width="4.4" height="3.1" fill="#8a7a70"/><rect x="487.8" y="500.4" width="3.5" height="2.7" fill="#6a6862"/><rect x="480.3" y="501.1" width="4.5" height="3.3" fill="#94908a"/><rect x="463.9" y="498.6" width="2.3" height="2.5" fill="#7a7872"/><rect x="467.5" y="501.5" width="2.8" height="2.7" fill="#a8a49c"/><rect x="488.4" y="502.3" width="2.1" height="2.4" fill="#6a6862"/><rect x="480.3" y="494.5" width="2.1" height="2.6" fill="#6a6862"/><rect x="471.8" y="485.0" width="2.1" height="2.7" fill="#7a7872"/><rect x="480.5" y="493.1" width="3.6" height="2.8" fill="#8a7a70"/><rect x="482.9" y="489.3" width="3.4" height="1.6" fill="#a8a49c"/><rect x="476.2" y="496.8" width="2.0" height="2.5" fill="#6a6862"/><rect x="470.9" y="498.1" width="2.5" height="2.3" fill="#a8a49c"/><rect x="489.3" y="496.3" width="3.1" height="2.8" fill="#94908a"/><rect x="483.0" y="492.3" width="1.9" height="2.8" fill="#94908a"/><rect x="481.8" y="491.5" width="3.1" height="1.9" fill="#7a7872"/><rect x="465.4" y="496.2" width="2.6" height="3.5" fill="#6a6862"/><rect x="487.1" y="491.5" width="3.6" height="2.7" fill="#7a7872"/><rect x="476.4" y="486.7" width="1.7" height="2.9" fill="#8a7a70"/><rect x="478.0" y="487.4" width="2.0" height="1.6" fill="#8a7a70"/><rect x="488.9" y="491.2" width="3.6" height="3.3" fill="#6a6862"/><rect x="478.4" y="500.0" width="4.2" height="2.7" fill="#8a7a70"/><rect x="483.9" y="496.3" width="4.4" height="2.1" fill="#a8a49c"/><rect x="488.2" y="493.5" width="2.1" height="2.4" fill="#8a7a70"/><rect x="478.3" y="491.4" width="2.0" height="2.1" fill="#6a6862"/><rect x="485.1" y="489.8" width="3.5" height="3.6" fill="#a8a49c"/><rect x="469.6" y="501.9" width="3.3" height="2.4" fill="#a8a49c"/><rect x="486.4" y="486.4" width="4.3" height="2.9" fill="#7a7872"/><rect x="463.6" y="497.0" width="1.6" height="2.3" fill="#94908a"/><rect x="464.1" y="489.0" width="2.8" height="2.7" fill="#94908a"/><rect x="472.5" y="500.9" width="2.8" height="2.1" fill="#94908a"/><rect x="466.1" y="487.6" width="3.7" height="1.5" fill="#94908a"/><rect x="485.0" y="486.1" width="1.9" height="3.4" fill="#94908a"/><rect x="480.3" y="485.9" width="2.1" height="2.4" fill="#7a7872"/><rect x="485.6" y="487.0" width="2.5" height="1.8" fill="#7a7872"/><rect x="472.9" y="501.4" width="4.4" height="2.2" fill="#94908a"/><rect x="466.4" y="493.2" width="4.0" height="3.4" fill="#6a6862"/><rect x="480.1" y="486.3" width="4.3" height="1.9" fill="#94908a"/><rect x="478" y="486" width="2.500" height="18" fill="#bcb6ac"/><rect x="494" y="486" width="25" height="18" fill="#a87c64"/><rect x="500.3" y="497.5" width="4.3" height="2.8" fill="#a08268"/><rect x="512.5" y="494.3" width="3.9" height="2.0" fill="#a47a62"/><rect x="505.6" y="490.7" width="4.1" height="2.0" fill="#946e58"/><rect x="498.8" y="497.1" width="3.3" height="2.1" fill="#c09a80"/><rect x="495.3" y="488.1" width="2.9" height="1.7" fill="#7a6658"/><rect x="501.8" y="491.3" width="3.0" height="2.9" fill="#946e58"/><rect x="499.2" y="486.5" width="2.2" height="2.8" fill="#a47a62"/><rect x="511.3" y="495.5" width="3.3" height="2.8" fill="#7a6658"/><rect x="502.1" y="492.0" width="2.7" height="2.9" fill="#d0ac98"/><rect x="504.7" y="495.1" width="1.9" height="2.0" fill="#8a7464"/><rect x="512.5" y="491.6" width="3.9" height="2.9" fill="#a08268"/><rect x="495.5" y="499.2" width="2.3" height="2.2" fill="#8a7464"/><rect x="509.6" y="501.8" width="3.3" height="2.8" fill="#a47a62"/><rect x="498.8" y="498.9" width="4.2" height="1.7" fill="#c09a80"/><rect x="510.6" y="502.3" width="1.8" height="1.6" fill="#8a7464"/><rect x="499.9" y="493.1" width="4.3" height="3.2" fill="#c09a80"/><rect x="500.7" y="488.2" width="3.4" height="3.2" fill="#b08a6c"/><rect x="511.1" y="495.2" width="2.8" height="1.7" fill="#c09a80"/><rect x="500.7" y="485.6" width="2.9" height="2.8" fill="#7a6658"/><rect x="496.2" y="496.2" width="2.8" height="2.0" fill="#b08a6c"/><rect x="495.3" y="494.4" width="1.9" height="3.2" fill="#b08a6c"/><rect x="507.8" y="490.4" width="3.0" height="1.9" fill="#d0ac98"/><rect x="515.7" y="497.6" width="3.2" height="3.4" fill="#a08268"/><rect x="509.1" y="487.7" width="2.9" height="3.1" fill="#a47a62"/><rect x="510.0" y="500.1" width="4.1" height="3.2" fill="#b8907a"/><rect x="494.2" y="487.9" width="1.8" height="1.8" fill="#8a7464"/><rect x="497.2" y="495.5" width="1.8" height="1.8" fill="#d0ac98"/><rect x="503.5" y="493.8" width="1.8" height="2.2" fill="#7a6658"/><rect x="494.7" y="489.4" width="1.8" height="3.4" fill="#946e58"/><rect x="497.9" y="493.0" width="2.7" height="2.6" fill="#8a7464"/><rect x="506.9" y="495.4" width="1.7" height="2.5" fill="#a47a62"/><rect x="516.0" y="488.7" width="3.1" height="2.5" fill="#7a6658"/><rect x="508.6" y="492.7" width="3.4" height="2.5" fill="#b8907a"/><rect x="495.7" y="488.0" width="4.3" height="1.9" fill="#c09a80"/><rect x="493.1" y="500.4" width="4.2" height="1.7" fill="#d0ac98"/><rect x="514.4" y="494.6" width="1.8" height="2.1" fill="#d0ac98"/><rect x="504.3" y="491.5" width="2.8" height="2.5" fill="#b8907a"/><rect x="514.0" y="501.0" width="3.0" height="3.5" fill="#946e58"/><rect x="507.1" y="501.2" width="2.0" height="2.6" fill="#a47a62"/><rect x="516.8" y="499.7" width="1.7" height="2.4" fill="#a08268"/><rect x="484" y="495" width="11" height="9" fill="#789a2c"/><rect x="495.500" y="486" width="2" height="18" fill="#d8c0b0"/></g></g><rect x="248" y="472" width="92" height="14" fill="#fff"/><rect x="421" y="472" width="99" height="14" fill="#fff"/>
<path d="M248 472.500h92M248 485.500h92M421 472.500h99M421 485.500h99" stroke="#8c8c90" stroke-width="1"/>
<path d="M339.500 452v54M420.500 452v54" stroke="#444a5a" stroke-width="1"/>
<path d="M248 449h273v3h-273z" fill="#7f93b3"/><path d="M248 506h273v4h-273z" fill="#8aa2c4"/>
<path d="M248 452.500h272" stroke="#5a6a8a"/>
<path d="M248 506.500h272" stroke="#5a6270"/>
<path d="M249 452l3 0-3 3z" fill="#3a4a9a"/><path d="M519 452l-3 0 3 3z" fill="#3a4a9a"/>
<path d="M248.500 449v60" stroke="#3a4ea0" stroke-width="1.400"/>
<path d="M324 476.500c4 0 5 7 9 7M324 483.500c4 0 5-7 9-7" stroke="#7088dc" stroke-width="1.800" fill="none"/><path d="M332 474l3.500 2.500-3.500 2.500zM332 481l3.500 2.500-3.500 2.500z" fill="#7088dc"/>
<path d="M505 476.500c4 0 5 7 9 7M505 483.500c4 0 5-7 9-7" stroke="#7088dc" stroke-width="1.800" fill="none"/><path d="M513 474l3.500 2.500-3.500 2.500zM513 481l3.500 2.500-3.500 2.500z" fill="#7088dc"/>
<path d="M407 469v10h9M405 471h9v9" stroke="#eef2fa" stroke-width="3" fill="none"/><rect x="408" y="472" width="6" height="7" fill="#c8d4ec"/><path d="M407 469v10h9M405 471h9v9" stroke="#4a64a8" stroke-width="1.100" fill="none"/>
<path d="M403.500 491.500h12" stroke="#eef2fa" stroke-width="4.200" stroke-linecap="round"/><rect x="406.500" y="486.500" width="6" height="10" rx="1" fill="#eef2fa"/><path d="M403.500 491.500h12" stroke="#7a9ac8" stroke-width="2.200" stroke-linecap="round"/><rect x="407.500" y="487.500" width="4" height="8" fill="#7a9ac8"/>
<path d="M251 506l-3 0 0-4z" fill="#222"/><path d="M381 506h6l-3 3z" fill="#111"/><path d="M519 506h2v-3z" fill="#111"/>
</svg>
<div class="t tah" style="left:270px;top:475px;font-size:10px;color:#222">Cubes</div>
<div class="t tah" style="left:446px;top:475px;font-size:10px;color:#222">Cubes</div>
<svg style="left:248px;top:509px" width="274" height="60" viewBox="248 509 274 60"><rect x="248" y="510" width="272" height="56" fill="#5c5688"/><rect x="514" y="510" width="6" height="56" fill="#7c80aa"/><path d="M249 518.4L250 517.6L251 518.0L252 519.3L253 520.0L254 520.4L255 520.3L256 520.6L257 519.8L258 519.7L259 519.4L260 520.1L261 521.6L262 522.5L263 523.4L264 523.8L265 523.7L266 523.0L267 518.2L268 517.1L269 515.4L270 513.7L271 514.6L272 517.4L273 518.0L274 519.0L275 520.6L276 521.5L277 521.8L278 521.2L279 520.8L280 520.7L281 516.8L282 516.8L283 518.0L284 519.2L285 518.7L286 518.3L287 518.1L288 521.1L289 519.6L290 518.4L291 517.5L292 516.9L293 517.9L294 518.4L295 519.6L296 521.5L297 522.4L298 512.4L299 514.2L300 516.8L301 517.0L302 518.0L303 516.9L304 515.1L305 515.3L306 514.8L307 514.7L308 515.0L309 515.9L310 516.1L311 515.9L312 515.9L313 516.5L314 518.2L315 518.9L316 519.3L317 518.2L318 518.1L319 517.6L320 516.9L321 517.8L322 518.5L323 517.8L324 516.5L325 517.4L326 516.7L327 517.4L328 518.4L329 518.7L330 519.4L331 519.0L332 517.7L333 517.6L334 516.7L335 516.7L336 516.4L337 516.7L338 515.6L339 515.7L340 515.2L341 514.5L342 515.6L343 516.2L344 517.4L345 517.0L346 515.7L347 515.2L348 515.7L349 516.9L350 515.3L351 515.0L352 515.4L353 514.7L354 513.7L355 515.8L356 516.4L357 518.1L358 517.2L359 518.1L360 516.8L361 517.9L362 518.6L363 517.8L364 518.2L365 517.6L366 516.2L367 516.7L368 517.0L369 517.7L370 518.7L371 518.9L372 518.5L373 518.4L374 518.0L375 518.0L376 518.4L377 519.0L378 518.3L379 516.4L380 516.0L381 514.9L382 515.8L383 516.1L384 515.8L385 516.4L386 515.6L387 515.8L388 515.9L389 516.3L390 516.7L391 516.5L392 515.7L393 515.4L394 513.9L395 515.0L396 515.4L397 516.2L398 515.6L399 517.2L400 516.4L401 516.0L402 517.4L403 517.8L404 517.8L405 519.2L406 518.4L407 518.0L408 516.3L409 516.3L410 517.5L411 517.1L412 518.5L413 517.6L414 518.4L415 518.4L416 518.3L417 518.6L418 518.7L419 519.6L420 518.4L421 518.0L422 515.9L423 516.5L424 515.5L425 516.8L426 517.0L427 516.1L428 515.6L429 516.0L430 515.8L431 517.2L432 517.9L433 517.6L434 516.3L435 515.7L436 515.2L437 515.1L438 515.6L439 516.6L440 515.4L441 516.0L442 517.1L443 517.8L444 517.9L445 518.8L446 518.7L447 519.3L448 519.7L449 519.6L450 519.2L451 519.3L452 518.3L453 519.0L454 519.1L455 519.5L456 519.7L457 519.4L458 520.6L459 520.9L460 521.4L461 521.3L462 521.6L463 521.8L464 521.7L465 521.7L466 521.5L467 521.4L468 521.4L469 521.6L470 522.1L471 522.0L472 522.5L473 523.1L474 523.0L475 523.3L476 523.6L477 523.6L478 523.6L479 523.8L480 523.3L481 523.6L482 523.7L483 523.8L484 523.8L485 523.9L486 524.0L487 524.0L488 524.2L489 524.3L490 524.4L491 524.5L492 524.4L493 524.4L494 524.5L495 524.5L496 524.5L497 524.5L498 524.5L499 524.5L500 524.5L501 524.5L502 524.5L503 524.5L504 524.5L505 524.5L506 524.5L507 524.5L508 524.5L509 524.5L510 524.5L511 524.5L512 524.5L513 524.5L514 524.5L515 524.5L515 525.5L514 525.4L513 525.5L512 525.5L511 525.5L510 525.4L509 525.5L508 525.5L507 525.5L506 525.4L505 525.4L504 525.5L503 525.4L502 525.5L501 525.4L500 525.4L499 525.4L498 525.4L497 525.4L496 525.5L495 525.5L494 525.4L493 525.6L492 525.5L491 525.5L490 525.5L489 525.6L488 525.7L487 525.9L486 525.8L485 526.1L484 526.1L483 526.3L482 526.3L481 526.2L480 526.6L479 526.2L478 526.3L477 526.4L476 526.4L475 526.7L474 526.8L473 527.1L472 527.3L471 527.3L470 527.6L469 528.3L468 528.3L467 528.3L466 528.1L465 528.0L464 528.3L463 528.1L462 528.4L461 528.5L460 528.6L459 528.8L458 529.8L457 529.8L456 530.7L455 530.4L454 530.6L453 530.4L452 531.1L451 531.2L450 530.1L449 530.8L448 529.9L447 530.2L446 530.8L445 531.4L444 532.1L443 531.8L442 533.0L441 532.7L440 532.3L439 533.3L438 533.4L437 533.4L436 533.2L435 532.9L434 532.3L433 531.8L432 531.7L431 532.2L430 532.9L429 533.0L428 534.6L427 532.9L426 533.9L425 534.0L424 534.2L423 534.6L422 532.9L421 531.3L420 531.4L419 531.0L418 530.1L417 531.6L416 530.9L415 532.2L414 531.2L413 532.3L412 532.4L411 532.1L410 532.4L409 532.9L408 531.7L407 531.6L406 530.9L405 530.7L404 531.6L403 531.8L402 533.3L401 533.7L400 532.1L399 533.2L398 534.0L397 534.3L396 534.0L395 534.8L394 533.7L393 534.8L392 532.4L391 533.3L390 533.6L389 533.2L388 533.8L387 533.3L386 532.9L385 533.4L384 533.1L383 533.2L382 534.4L381 535.0L380 533.7L379 532.7L378 531.6L377 531.6L376 530.7L375 530.6L374 531.5L373 531.9L372 531.5L371 530.8L370 532.0L369 532.0L368 533.0L367 532.7L366 532.1L365 532.6L364 532.0L363 531.4L362 530.6L361 531.9L360 532.3L359 532.4L358 532.2L357 531.2L356 532.0L355 534.6L354 534.3L353 535.6L352 535.2L351 533.8L350 533.9L349 533.5L348 534.0L347 533.5L346 534.2L345 532.3L344 531.9L343 532.2L342 534.0L341 533.8L340 535.0L339 534.0L338 532.8L337 533.1L336 532.9L335 532.8L334 533.1L333 531.6L332 532.2L331 531.4L330 530.3L329 530.7L328 531.8L327 531.1L326 532.0L325 533.7L324 531.8L323 531.5L322 530.9L321 531.7L320 532.9L319 531.3L318 531.4L317 530.6L316 531.4L315 530.9L314 531.4L313 532.2L312 533.2L311 533.2L310 534.3L309 533.4L308 534.3L307 534.5L306 533.1L305 534.3L304 533.8L303 532.8L302 532.0L301 531.8L300 532.9L299 534.9L298 534.7L297 527.7L296 528.3L295 530.1L294 531.6L293 532.0L292 533.4L291 532.0L290 532.1L289 529.9L288 529.0L287 531.8L286 530.5L285 531.3L284 531.2L283 531.8L282 532.9L281 532.4L280 528.9L279 528.4L278 528.4L277 528.4L276 528.5L275 529.4L274 529.6L273 530.8L272 532.7L271 535.4L270 535.4L269 533.5L268 532.7L267 531.0L266 526.9L265 526.1L264 526.1L263 526.6L262 527.6L261 528.1L260 529.0L259 529.2L258 529.7L257 530.2L256 529.1L255 529.7L254 529.1L253 530.1L252 530.8L251 531.2L250 530.9L249 530.7z" fill="#e6d2d8"/><path d="M249 538.2L250 540.6L251 540.6L252 542.4L253 542.2L254 543.5L255 543.9L256 545.2L257 544.7L258 545.5L259 546.6L260 548.1L261 548.7L262 538.9L263 539.7L264 540.8L265 541.0L266 541.7L267 541.8L268 542.8L269 542.5L270 543.8L271 544.1L272 545.2L273 546.0L274 546.9L275 548.3L276 548.8L277 538.6L278 540.4L279 540.3L280 542.5L281 544.3L282 546.5L283 548.2L284 538.5L285 538.9L286 541.4L287 543.4L288 544.7L289 546.4L290 547.9L291 537.8L292 539.4L293 540.2L294 541.6L295 540.3L296 542.1L297 542.1L298 544.0L299 544.6L300 544.6L301 545.6L302 547.5L303 547.6L304 549.0L305 540.3L306 539.2L307 538.8L308 545.8L309 545.8L310 546.0L311 546.7L312 546.9L313 547.0L314 546.2L315 545.1L316 545.6L317 544.9L318 545.9L319 545.5L320 545.6L321 545.0L322 545.2L323 544.1L324 544.5L325 546.1L326 545.9L327 547.2L328 547.2L329 547.0L330 546.2L331 546.2L332 545.8L333 545.3L334 545.3L335 545.9L336 545.2L337 545.1L338 545.6L339 545.3L340 545.1L341 546.0L342 546.1L343 547.4L344 547.7L345 547.7L346 547.4L347 546.0L348 545.8L349 545.4L350 546.5L351 546.0L352 546.1L353 546.2L354 546.0L355 545.5L356 544.5L357 544.8L358 546.3L359 546.5L360 547.9L361 547.7L362 547.7L363 546.5L364 546.7L365 546.1L366 547.1L367 546.2L368 546.4L369 546.7L370 545.4L371 545.9L372 545.6L373 546.1L374 545.5L375 546.2L376 547.7L377 547.3L378 547.8L379 547.4L380 546.5L381 546.5L382 546.5L383 547.0L384 547.4L385 546.7L386 546.9L387 546.3L388 546.2L389 545.8L390 545.4L391 546.9L392 547.7L393 547.6L394 548.1L395 547.6L396 547.1L397 547.0L398 546.9L399 547.4L400 547.4L401 547.8L402 547.6L403 546.5L404 546.2L405 545.7L406 545.5L407 545.9L408 547.2L409 547.4L410 548.4L411 548.3L412 547.2L413 547.1L414 547.2L415 548.0L416 547.6L417 548.0L418 548.1L419 547.6L420 546.9L421 545.9L422 546.7L423 546.2L424 547.3L425 547.4L426 548.4L427 548.2L428 547.8L429 548.1L430 547.9L431 548.2L432 548.5L433 548.7L434 548.1L435 548.0L436 547.0L437 547.2L438 547.2L439 547.3L440 547.5L441 548.1L442 547.8L443 548.6L444 548.7L445 549.1L446 549.1L447 549.5L448 549.1L449 549.6L450 549.1L451 549.4L452 549.0L453 549.1L454 549.1L455 549.2L456 549.6L457 549.5L458 550.0L459 550.1L460 550.5L461 550.5L462 550.9L463 550.8L464 550.9L465 551.1L466 551.2L467 551.3L468 551.3L469 551.4L470 551.6L471 551.6L472 551.7L473 552.0L474 552.0L475 552.0L476 552.0L477 552.0L478 552.0L479 552.0L480 552.0L481 552.0L482 552.0L483 552.0L484 552.0L485 552.0L486 552.0L487 552.0L488 552.0L489 552.0L490 552.0L491 552.0L492 552.0L493 552.0L494 552.0L495 552.0L496 552.0L497 552.0L498 552.0L499 552.0L500 552.0L501 552.0L502 552.0L503 552.0L504 552.0L505 552.0L506 552.0L507 552.0L508 552.0L509 552.0L510 552.0L511 552.0L512 552.0L513 552.0L514 552.0L515 552.0L515 552.9L514 552.8L513 552.9L512 552.9L511 552.9L510 552.8L509 552.9L508 552.9L507 552.9L506 552.9L505 552.9L504 552.9L503 552.9L502 552.9L501 552.9L500 552.9L499 552.9L498 552.9L497 552.9L496 552.9L495 552.9L494 552.9L493 552.9L492 552.9L491 552.9L490 552.9L489 552.9L488 552.9L487 552.9L486 552.9L485 552.9L484 552.9L483 552.9L482 552.9L481 552.9L480 552.8L479 552.9L478 552.8L477 552.8L476 552.9L475 552.9L474 552.9L473 552.9L472 553.2L471 553.2L470 553.3L469 553.3L468 553.4L467 553.5L466 553.5L465 553.6L464 553.5L463 553.6L462 553.9L461 554.2L460 554.1L459 554.3L458 554.5L457 554.5L456 555.0L455 554.7L454 554.8L453 555.1L452 554.9L451 554.7L450 555.2L449 554.7L448 555.3L447 555.0L446 555.5L445 555.2L444 555.6L443 555.9L442 556.4L441 556.3L440 556.1L439 557.0L438 557.0L437 557.6L436 556.3L435 555.8L434 556.1L433 555.5L432 555.8L431 556.4L430 556.0L429 556.4L428 555.7L427 556.0L426 555.6L425 556.3L424 556.4L423 556.8L422 557.3L421 557.1L420 557.2L419 556.3L418 556.0L417 556.0L416 555.6L415 556.4L414 556.3L413 556.3L412 556.3L411 555.8L410 555.8L409 556.6L408 557.0L407 556.7L406 557.8L405 557.4L404 558.2L403 556.9L402 557.0L401 556.1L400 556.0L399 556.3L398 556.4L397 556.2L396 556.9L395 556.4L394 556.0L393 556.1L392 556.6L391 556.6L390 558.3L389 558.6L388 558.0L387 557.0L386 557.4L385 556.3L384 556.5L383 556.5L382 557.2L381 557.2L380 556.4L379 556.5L378 556.0L377 556.7L376 556.5L375 556.4L374 557.7L373 558.4L372 557.8L371 558.2L370 557.7L369 556.9L368 557.5L367 556.8L366 556.7L365 556.7L364 557.5L363 556.3L362 556.4L361 556.7L360 556.4L359 556.8L358 557.9L357 557.6L356 557.7L355 558.0L354 557.2L353 557.4L352 557.2L351 556.8L350 558.0L349 557.4L348 558.2L347 557.7L346 556.7L345 556.1L344 557.0L343 556.7L342 557.9L341 557.8L340 557.8L339 559.1L338 558.6L337 557.5L336 557.5L335 557.3L334 558.1L333 557.5L332 557.8L331 557.0L330 557.8L329 556.6L328 556.8L327 556.3L326 557.5L325 557.4L324 558.2L323 558.7L322 558.4L321 557.5L320 557.6L319 558.1L318 557.5L317 558.5L316 557.9L315 557.8L314 558.3L313 557.6L312 556.9L311 557.2L310 557.4L309 557.9L308 557.7L307 561.6L306 563.1L305 563.3L304 554.8L303 556.0L302 557.0L301 556.9L300 558.7L299 558.7L298 559.0L297 559.5L296 560.9L295 560.4L294 561.2L293 561.9L292 562.9L291 563.2L290 556.4L289 557.2L288 558.2L287 559.3L286 560.4L285 563.6L284 562.6L283 556.4L282 557.1L281 558.6L280 559.7L279 560.7L278 562.9L277 563.0L276 554.9L275 555.5L274 556.8L273 557.3L272 557.3L271 558.6L270 559.9L269 560.3L268 561.2L267 560.2L266 560.8L265 562.9L264 563.3L263 561.7L262 563.2L261 555.3L260 555.9L259 556.6L258 557.8L257 557.6L256 559.2L255 560.0L254 559.7L253 560.2L252 561.2L251 560.6L250 563.3L249 563.4z" fill="#e6d2d8"/><path d="M248 538.500h266" stroke="#2a2844" stroke-width="1.200"/><path d="M514.500 511c2 8 3.500 20 4 55" stroke="#f0f0fa" stroke-width="1.300" fill="none"/><path d="M248 510.500h272M248 566.500h272" stroke="#4a4870" stroke-width="1"/><path d="M248.500 509v58" stroke="#3a4ea0" stroke-width="1.400"/><path d="M249 510l4 3-4 3z" fill="#3a4ae0"/><path d="M249 566l4 0-4-4z" fill="#c8d4f0"/><path d="M383.500 511v55" stroke="#c8c0d8" stroke-width="1" stroke-dasharray="1 3" opacity=".5"/></svg>
<div class="a" style="left:520px;top:431px;width:1px;height:197px;background:#2a3040"></div>
<div class="a" style="left:517px;top:434px;width:8px;height:13px;background:linear-gradient(90deg,#e4ecfc,#b8c8ec);border:1px solid #8a9ac0;border-radius:3px"></div>
<div class="a" style="left:519px;top:437px;width:1px;height:7px;background:#6a7aa8;box-shadow:2px 0 0 #6a7aa8"></div>
<!-- track headers -->
<div class="a" style="left:4px;top:448px;width:237px;height:61px;background:#efecdf;border:1px solid #b4b0a0;border-right-color:#fff"></div>
<div class="a" style="left:4px;top:509px;width:237px;height:60px;background:#c5d0dc;border:1px solid #aab4c0;border-top-color:#98a2b0"></div>
<div class="a" style="left:4px;top:569px;width:237px;height:58px;border-left:1px solid #c4c0b0;border-right:1px solid #fff;border-bottom:1px solid #fff"></div>
<div class="a" style="left:7px;top:453px;width:13px;height:7px;background:#aab6d6;border:1px solid #8a98c0;border-radius:2px"></div><div class="a" style="left:10px;top:456px;width:7px;height:2px;background:#eef2fc"></div><div class="a" style="left:7px;top:460px;width:13px;height:7px;background:#aab6d6;border:1px solid #8a98c0;border-radius:2px"></div><div class="a" style="left:10px;top:462px;width:7px;height:3px;border:1px solid #eef2fc"></div>
<div class="a" style="left:7px;top:513px;width:13px;height:7px;background:#aab6d6;border:1px solid #8a98c0;border-radius:2px"></div><div class="a" style="left:10px;top:516px;width:7px;height:2px;background:#eef2fc"></div><div class="a" style="left:7px;top:520px;width:13px;height:7px;background:#aab6d6;border:1px solid #8a98c0;border-radius:2px"></div><div class="a" style="left:10px;top:522px;width:7px;height:3px;border:1px solid #eef2fc"></div>
<div class="a" style="left:23px;top:453px;width:23px;height:15px;background:linear-gradient(#8a9cc8,#6078b0);border-radius:2px"></div>
<div class="t tah" style="left:36px;top:453px;font-size:14px;color:#fff">1</div>
<div class="a" style="left:50px;top:453px;width:59px;height:15px;background:#f3f0e3;border:1px solid #e4e0d0"></div>
<div class="a" style="left:23px;top:513px;width:23px;height:15px;background:linear-gradient(#b85a64,#98303c);border-radius:2px"></div>
<div class="a" style="left:26px;top:515px;width:3px;height:3px;background:#fff"></div>
<div class="t tah" style="left:36px;top:513px;font-size:14px;color:#fff">2</div>
<div class="a" style="left:50px;top:513px;width:52px;height:15px;background:#f0ede0"></div>
<svg style="left:0;top:448px" width="245" height="125" viewBox="0 448 245 125"><rect x="116.500" y="457.500" width="8" height="8" fill="#a8d4d4" stroke="#5a9aa0"/><rect x="119.500" y="454.500" width="8" height="8" fill="#b8dce0" stroke="#5a9aa0"/><path d="M114 454l13 12M127 454l-13 12" stroke="#d03848" stroke-width="1.300"/><rect x="135.500" y="454.500" width="10" height="9" fill="#f4f6fc" stroke="#4a5a88"/><rect x="141.500" y="459.500" width="8" height="7" fill="#c8d0f0" stroke="#8a96c8"/><path d="M137 456l4 4m0-3v3h-3" stroke="#222" fill="none"/><path d="M159 460h15" stroke="#8a9ac0" stroke-width="2"/><rect x="164.500" y="455.500" width="5" height="9" fill="#a8b8d8" stroke="#6a7aa8"/><circle cx="160" cy="460" r="1.800" fill="#8a9ac0"/><circle cx="173" cy="460" r="1.800" fill="#8a9ac0"/><circle cx="187" cy="460" r="5" fill="#8a4a6a" stroke="#7a3e60" stroke-width="3" stroke-dasharray="2.300 1.630"/><circle cx="187" cy="460" r="4.500" fill="#8a4a6a"/><circle cx="187" cy="460" r="2.300" fill="#f4b4d0"/><circle cx="209.5" cy="460" r="5.500" fill="#e4e8fa" stroke="#6a7ad8" stroke-width="1.800"/><path d="M205.5 456l8 8" stroke="#6a7ad8" stroke-width="1.800"/><path d="M228 454v8" stroke="#8a6a9a" stroke-width="2.600"/><circle cx="228" cy="465" r="1.400" fill="#8a6a9a"/><path d="M117 479.500h55" stroke="#77746a" stroke-width="1.400"/><path d="M117 480.500h55" stroke="#fff"/><rect x="156.5" y="474.5" width="17" height="13" rx="2.500" fill="#e4e6ea" stroke="#8a8e98"/><path d="M163.5 477v8M165.5 477v8M167.5 477v8" stroke="#6a6e78"/><rect x="183.500" y="474.500" width="9" height="9" fill="#3a4a5a" stroke="#222"/><path d="M184 476h8" stroke="#ccc" stroke-dasharray="1 1"/><rect x="188.500" y="479.500" width="8" height="8" fill="#7ad0b8" stroke="#3a8a78"/><circle cx="192.500" cy="483.500" r="2" fill="none" stroke="#1a5a48"/><path d="M207 476l-3.500 4h2.500v3h2v-3h2.500zM209 486h6v-4" fill="#a4a898" stroke="#a4a898" stroke-width=".8"/><path d="M229 487l-3.500-4h2.500v-3h2v3h2.500zM221 476h6v3" fill="#b4b6aa" stroke="#b4b6aa" stroke-width=".8"/><circle cx="114" cy="520" r="6" fill="#f4d4d8" stroke="#c84858" stroke-width="1.800"/><circle cx="114" cy="520" r="2.800" fill="#d03848"/><circle cx="114" cy="520" r="1" fill="#fff"/><circle cx="136.500" cy="520" r="5" fill="#c8d0f0" stroke="#8a98d8" stroke-width="1.500"/><path d="M131 525l11-10" stroke="#6a7ac8" stroke-width="1.600"/><path d="M152 520h15" stroke="#2a9a78" stroke-width="3"/><rect x="157" y="514.500" width="5" height="11" fill="#3ab088" stroke="#1a7a5a" stroke-width=".6"/><circle cx="153" cy="520" r="2" fill="#2a9a78"/><circle cx="166" cy="520" r="2" fill="#2a9a78"/><path d="M170.500 517.500h4.500l-2.250 2.800z" fill="#222"/><circle cx="187" cy="520" r="5" fill="#8a4a6a" stroke="#7a3e60" stroke-width="3" stroke-dasharray="2.300 1.630"/><circle cx="187" cy="520" r="4.500" fill="#8a4a6a"/><circle cx="187" cy="520" r="2.300" fill="#f4b4d0"/><circle cx="209.5" cy="520" r="5.500" fill="#e4e8fa" stroke="#6a7ad8" stroke-width="1.800"/><path d="M205.5 516l8 8" stroke="#6a7ad8" stroke-width="1.800"/><path d="M228 514v8" stroke="#7a8ab0" stroke-width="2.600"/><circle cx="228" cy="525" r="1.400" fill="#7a8ab0"/><path d="M110 538.500h117M110 556.500h117" stroke="#77746a" stroke-width="1.400"/><path d="M110 539.500h117M110 557.500h117" stroke="#fff"/><path d="M226.500 536v5M226.500 554v5" stroke="#fff"/><rect x="176.5" y="533.5" width="17" height="13" rx="2.500" fill="#e4e6ea" stroke="#8a8e98"/><path d="M183.5 536v8M185.5 536v8M187.5 536v8" stroke="#6a6e78"/><rect x="159.5" y="551.5" width="17" height="13" rx="2.500" fill="#e4e6ea" stroke="#8a8e98"/><path d="M166.5 554v8M168.5 554v8M170.5 554v8" stroke="#6a6e78"/></svg>
<div class="t tah" style="left:25px;top:475px;font-size:11.8px;">大小: 100.0 %</div>
<div class="t tah" style="left:25px;top:534px;font-size:11.8px;">音量:</div>
<div class="t tah" style="left:25px;top:552px;font-size:11.8px;">音場:</div>
<div class="t tah" style="left:40px;top:534px;width:60px;text-align:right;font-size:11.8px;">0.0 dB</div>
<div class="t tah" style="left:40px;top:552px;width:60px;text-align:right;font-size:11.8px;">中央</div>
<div class="t tah" style="left:6px;top:642.500px;font-size:11.3px;">速率: 0.00</div>
<svg style="left:80px;top:640px" width="160" height="30" viewBox="80 640 160 30"><path d="M89 649.500h138" stroke="#a8a598"/><path d="M89 650.500h138" stroke="#fff"/><path d="M146 649.500l5.500-5.500 5.500 5.500-5.500 5.500zM158 649.500l5.500-5.500 5.500 5.500-5.500 5.500z" fill="#6a7a92" stroke="#56657c"/><path d="M152 649.500l5.500-5.500 5.500 5.500-5.500 5.500z" fill="#93a2b8" stroke="#56657c"/><path d="M172 656l5.500 10h-11z" fill="#b8825a" stroke="#8a5a3a" stroke-width=".6"/></svg>
<!-- scrollbars / transport -->
<div class="a" style="left:248px;top:628px;width:694px;height:15px;background:linear-gradient(#f3f1ec,#fefefb)"></div>
<div class="a" style="left:248px;top:628px;width:15px;height:15px;background:linear-gradient(135deg,#d5e0fd,#b7cbf8);border:1px solid #fff;border-radius:3px"></div>
<div class="a" style="left:263px;top:628px;width:132px;height:15px;background:linear-gradient(#cddafd,#bccefa 60%,#b3c6f5);border:1px solid #fff;border-radius:3px"></div>
<div class="a" style="left:888px;top:628px;width:15px;height:15px;background:linear-gradient(135deg,#d5e0fd,#b7cbf8);border:1px solid #fff;border-radius:3px"></div>
<div class="a" style="left:904px;top:628px;width:16px;height:15px;background:linear-gradient(135deg,#d5e0fd,#b7cbf8);border:1px solid #fff;border-radius:3px"></div>
<div class="a" style="left:927px;top:628px;width:15px;height:15px;background:linear-gradient(135deg,#d5e0fd,#b7cbf8);border:1px solid #fff;border-radius:3px"></div>
<div class="a" style="left:942px;top:628px;width:16px;height:15px;background:linear-gradient(135deg,#d5e0fd,#b7cbf8);border:1px solid #fff;border-radius:3px"></div>
<svg style="left:248px;top:628px" width="712" height="15" viewBox="248 628 712 15"><path d="M257.500 632l-3.500 3.500 3.500 3.500" stroke="#4d6185" stroke-width="2" fill="none"/><path d="M894 632l3.500 3.500-3.500 3.500" stroke="#4d6185" stroke-width="2" fill="none"/><path d="M909 635.500h6M912 632.500v6" stroke="#111" stroke-width="2"/><path d="M932 635.500h6" stroke="#111" stroke-width="2"/><circle cx="949" cy="634.500" r="2.600" fill="none" stroke="#111" stroke-width="1.400"/><path d="M951 637l2.500 2.500" stroke="#111" stroke-width="1.600"/><path d="M266 632v7M268 632v7" stroke="#eef4fe"/><path d="M390 632v7M392 632v7" stroke="#eef4fe"/></svg>
<div class="a" style="left:942px;top:400px;width:16px;height:228px;background:linear-gradient(90deg,#f3f1ec,#fefefb)"></div>
<div class="a" style="left:943px;top:401px;width:14px;height:14px;background:linear-gradient(135deg,#dfe6fd,#c1d0f8);border:1px solid #9ab0e8;border-radius:2px"></div>
<div class="a" style="left:942px;top:416px;width:16px;height:15px;background:linear-gradient(135deg,#d5e0fd,#b7cbf8);border:1px solid #fff;border-radius:3px"></div>
<div class="a" style="left:942px;top:432px;width:16px;height:104px;background:linear-gradient(90deg,#cddafd,#bccefa 60%,#b3c6f5);border:1px solid #fff;border-radius:3px"></div>
<div class="a" style="left:942px;top:574px;width:16px;height:15px;background:linear-gradient(135deg,#d5e0fd,#b7cbf8);border:1px solid #fff;border-radius:3px"></div>
<div class="a" style="left:942px;top:590px;width:16px;height:17px;background:linear-gradient(135deg,#d5e0fd,#b7cbf8);border:1px solid #fff;border-radius:3px"></div>
<div class="a" style="left:942px;top:609px;width:16px;height:17px;background:linear-gradient(135deg,#d5e0fd,#b7cbf8);border:1px solid #fff;border-radius:3px"></div>
<svg style="left:942px;top:400px" width="16" height="228" viewBox="942 400 16 228"><path d="M947 405v8M947 405h6v4h-6" stroke="#111" stroke-width="1.600" fill="#111"/><rect x="949" y="406.500" width="3" height="1.500" fill="#dfe6fd"/><path d="M946.500 425.500l3.500-3.500 3.500 3.500" stroke="#4d6185" stroke-width="2" fill="none"/><path d="M946.500 579.500l3.500 3.500 3.500-3.500" stroke="#4d6185" stroke-width="2" fill="none"/><path d="M947 598.500h6M950 595.500v6" stroke="#111" stroke-width="2"/><path d="M947 617.500h6" stroke="#111" stroke-width="2"/><path d="M947 481.500h6M947 483.500h6M947 485.500h6M947 487.500h6" stroke="#eef4fe"/></svg>
<div class="a" style="left:248px;top:644px;width:712px;height:1px;background:#fff"></div>
<div class="a" style="left:730px;top:645px;width:1px;height:24px;background:#c5c2b0"></div>
<svg style="left:248px;top:645px" width="480" height="26" viewBox="248 645 480 26"><circle cx="261.500" cy="657" r="6" fill="#f4d4d8" stroke="#c84858" stroke-width="1.800"/><circle cx="261.500" cy="657" r="2.800" fill="#d03848"/><path d="M276.500 648v18M305.500 648v18M404.500 648v18" stroke="#cbc7b4"/><path d="M277.500 648v18M306.500 648v18M405.500 648v18" stroke="#f5f3ea"/><path d="M295.500 654a5 5 0 1 1-4.500-2" stroke="#5a6478" stroke-width="1.800" fill="none"/><path d="M289 649l4 3-4 3z" fill="#5a6478"/><path d="M314.500 651v12" stroke="#6a7488" stroke-width="2"/><path d="M318 651l10.500 6-10.500 6z" fill="#7a8498" stroke="#5a6478"/><path d="M338 651l13 6-13 6z" fill="#7a8498" stroke="#5a6478"/><rect x="360.500" y="651.500" width="4" height="11" fill="#7a8498" stroke="#5a6478"/><rect x="368.500" y="651.500" width="4" height="11" fill="#7a8498" stroke="#5a6478"/><rect x="383.500" y="651.500" width="11" height="11" fill="#7a8498" stroke="#5a6478"/><path d="M413.500 651v12" stroke="#5a6478" stroke-width="2.400"/><path d="M424 651l-8 6 8 6z" fill="#7a8498" stroke="#5a6478"/><path d="M445.500 651v12" stroke="#5a6478" stroke-width="2.400"/><path d="M435 651l8 6-8 6z" fill="#7a8498" stroke="#5a6478"/></svg>
<div class="a" style="left:736px;top:648px;width:72px;height:18px;background:#f5f4ee;border:1px solid #9a978a;border-right-color:#fff;border-bottom-color:#fff"></div>
<div class="t tah" style="left:736px;top:651px;width:72px;text-align:center;font-size:11.3px;color:#222">00:00:00;00</div>
<div class="a" style="left:810px;top:648px;width:72px;height:18px;background:#f5f4ee;border:1px solid #9a978a;border-right-color:#fff;border-bottom-color:#fff"></div>
<div class="t tah" style="left:810px;top:651px;width:72px;text-align:center;font-size:11.3px;color:#222">00:00:09;29</div>
<div class="a" style="left:884px;top:648px;width:72px;height:18px;background:#f5f4ee;border:1px solid #9a978a;border-right-color:#fff;border-bottom-color:#fff"></div>
<div class="t tah" style="left:884px;top:651px;width:72px;text-align:center;font-size:11.3px;color:#222">00:00:09;29</div>
<!-- status bar -->
<div class="a" style="left:0;top:671px;width:960px;height:1px;background:#c5c2b0"></div>
<div class="a" style="left:0;top:672px;width:960px;height:1px;background:#fff"></div>
<div class="a" style="left:4px;top:674px;width:34px;height:17px;background:#f4f3ee;border:1.500px solid #2a2a3a;border-radius:3px"></div>
<div class="t ming" style="left:9px;top:677px;font-size:11.25px;font-weight:bold">取消</div>
<div class="a" style="left:41px;top:674px;width:325px;height:17px;background:#fff;border:1px solid #6a6a6a;border-radius:3px"></div>
<div class="a" style="left:45px;top:677px;width:4.800px;height:11px;background:linear-gradient(#7ae87a,#30c434 50%,#66de68)"></div><div class="a" style="left:51px;top:677px;width:4.800px;height:11px;background:linear-gradient(#7ae87a,#30c434 50%,#66de68)"></div><div class="a" style="left:57px;top:677px;width:4.800px;height:11px;background:linear-gradient(#7ae87a,#30c434 50%,#66de68)"></div><div class="a" style="left:63px;top:677px;width:4.800px;height:11px;background:linear-gradient(#7ae87a,#30c434 50%,#66de68)"></div><div class="a" style="left:69px;top:677px;width:4.800px;height:11px;background:linear-gradient(#7ae87a,#30c434 50%,#66de68)"></div><div class="a" style="left:75px;top:677px;width:4.800px;height:11px;background:linear-gradient(#7ae87a,#30c434 50%,#66de68)"></div><div class="a" style="left:81px;top:677px;width:4.800px;height:11px;background:linear-gradient(#7ae87a,#30c434 50%,#66de68)"></div><div class="a" style="left:87px;top:677px;width:4.800px;height:11px;background:linear-gradient(#7ae87a,#30c434 50%,#66de68)"></div><div class="a" style="left:93px;top:677px;width:4.800px;height:11px;background:linear-gradient(#7ae87a,#30c434 50%,#66de68)"></div><div class="a" style="left:99px;top:677px;width:4.800px;height:11px;background:linear-gradient(#7ae87a,#30c434 50%,#66de68)"></div><div class="a" style="left:105px;top:677px;width:4.800px;height:11px;background:linear-gradient(#7ae87a,#30c434 50%,#66de68)"></div>
<div class="t tah" style="left:41px;top:676px;width:325px;text-align:center;font-size:12.3px;font-weight:bold;">20 %</div>
<div class="t tah" style="left:372px;top:677px;font-size:11.3px;">建檔 12-1a.wmv</div>
<div class="a" style="left:772px;top:674px;width:1px;height:17px;background:#aca899"></div>
<div class="a" style="left:773px;top:674px;width:1px;height:17px;background:#fff"></div>
<div class="t tah" style="left:777px;top:677px;font-size:11.3px;">錄製時間 (2 聲道): 29:18:20</div>
<!-- taskbar -->
<div class="a" style="left:0;top:692px;width:960px;height:28px;background:linear-gradient(#3a82f0 0,#2a68de 3px,#245edc 8px,#2460dc 20px,#1c48b4 28px)"></div>
<div class="a" style="left:0;top:692px;width:84px;height:28px;background:linear-gradient(#5aa85a 0,#3c943c 4px,#2e8a32 14px,#2c7c30 24px,#256a2a 28px);border-radius:0 12px 12px 0;box-shadow:1px 0 2px #14388a"></div>
<svg style="left:12px;top:696px" width="20" height="20" viewBox="0 0 20 20"><path d="M3 4q3-2 6 0l-1.500 5q-3-2-6 0z" fill="#e8542c"/><path d="M10.500 4.500q3 2 6 0l-1.500 5q-3 2-6 0z" fill="#7cc43c"/><path d="M1.200 10.500q3-2 6 0l-1.500 5q-3-2-6 0z" fill="#4a8ae8"/><path d="M8.700 11q3 2 6 0l-1.500 5q-3 2-6 0z" fill="#f4c82c"/></svg>
<div class="t" style="left:33px;top:698px;font-size:15px;color:#fff;font-style:italic;letter-spacing:-0.5px;text-shadow:1px 1px 1px #1a4a1a">開始</div>
<svg style="left:90px;top:694px" width="160" height="24" viewBox="90 694 160 24">
<path d="M109.500 708.500a5.500 5.500 0 1 1 .5-3.500h-10" fill="none" stroke="#4aa4f0" stroke-width="2.600" transform="rotate(-12 104 706)"/><path d="M96 709q2-9 15-10" stroke="#8ccaf8" stroke-width="1.200" fill="none"/>
<path d="M120 703h9l-1 11h-7z" fill="#c88a3a" stroke="#7a4a1a"/><path d="M122 699l1 5M125 698v6M128 699l-1 5" stroke="#e8c84a" stroke-width="1.600"/>
<path d="M140 700h6l1.500 2h7v11H140z" fill="#e8c86a" stroke="#8a6a2a"/><rect x="144" y="703" width="8" height="7" fill="#f4f0e0" stroke="#8a8a8a" stroke-width=".6"/>
<rect x="161" y="698" width="16" height="16" fill="#fff"/><path d="M163 700l3 9 3-9" stroke="#d82a2a" stroke-width="1.800" fill="none"/><path d="M176 705q-5-2-5 3t5 3" stroke="#2a4ac8" stroke-width="1.800" fill="none"/><path d="M171 699v4h4" stroke="#2a9a4a" stroke-width="1.400" fill="none"/>
<path d="M184 699h9l3 3v12h-12z" fill="#7ab8e8" stroke="#3a7ab8"/><path d="M186 704h7M186 707h7" stroke="#c8e4f8"/>
<path d="M206 702h10l3 3v8h-13z" fill="#e8ecf4" stroke="#5a6a8a"/><circle cx="211" cy="708" r="3" fill="#3a8ad8"/><path d="M214 699l4 3" stroke="#fff" stroke-width="2"/>
<rect x="227" y="699" width="5" height="14" fill="#8a3a2a"/><rect x="231" y="698" width="5" height="15" fill="#e8d8a8" stroke="#5a4a2a" stroke-width=".6"/><rect x="236" y="700" width="4" height="13" fill="#4a6a9a"/>
</svg>
<div class="t" style="left:264px;top:692px;font-size:13px;color:#fff;letter-spacing:-1px">»</div>
<div class="a" style="left:281px;top:696px;width:60px;height:21px;background:linear-gradient(#5a9afc 0,#3c82f4 3px,#3a7cee 18px,#3070e0);border-radius:2px;box-shadow:inset -1px -1px 1px #2a5ac8"></div>
<svg style="left:288px;top:698px" width="16" height="16" viewBox="0 0 16 16"><path d="M3 7h9l-1 8H4z" fill="#c88a3a" stroke="#7a4a1a"/><path d="M5 2l1 5M8 1v6M11 2l-1 5" stroke="#e8c84a" stroke-width="1.600"/></svg>
<div class="t ming" style="left:308px;top:700px;font-size:11.25px;color:#fff">未...</div>
<div class="a" style="left:343px;top:696px;width:60px;height:21px;background:linear-gradient(#5a9afc 0,#3c82f4 3px,#3a7cee 18px,#3070e0);border-radius:2px;box-shadow:inset -1px -1px 1px #2a5ac8"></div>
<svg style="left:350px;top:698px" width="16" height="16" viewBox="0 0 16 16"><path d="M1 3h6l1.500 2h7v9H1z" fill="#e8c86a" stroke="#8a6a2a"/><rect x="5" y="6" width="8" height="6" fill="#f4f0e0" stroke="#8a8a8a" stroke-width=".6"/></svg>
<div class="t ming" style="left:370px;top:700px;font-size:11.25px;color:#fff">12...</div>
<div class="a" style="left:405px;top:696px;width:60px;height:21px;background:#1e52b8;border-radius:2px;box-shadow:inset 1px 1px 2px #143a8c"></div>
<svg style="left:412px;top:698px" width="16" height="16" viewBox="0 0 16 16"><ellipse cx="8" cy="8" rx="7.500" ry="6.500" fill="#2a2c33"/><ellipse cx="8" cy="6.500" rx="5" ry="3" fill="#5a6274"/><path d="M4 9l3-2 2 2 3-3" stroke="#e84a3a" fill="none"/></svg>
<div class="t ming" style="left:432px;top:700px;font-size:11.25px;color:#fff">20...</div>
<div class="a" style="left:467px;top:696px;width:60px;height:21px;background:linear-gradient(#5a9afc 0,#3c82f4 3px,#3a7cee 18px,#3070e0);border-radius:2px;box-shadow:inset -1px -1px 1px #2a5ac8"></div>
<svg style="left:474px;top:698px" width="16" height="16" viewBox="0 0 16 16"><path d="M3 1h8l3 3v11H3z" fill="#7ab8e8" stroke="#3a7ab8"/><path d="M5 6h7M5 9h7M5 12h7" stroke="#c8e4f8"/></svg>
<div class="t ming" style="left:494px;top:700px;font-size:11.25px;color:#fff">13...</div>
<div class="a" style="left:529px;top:696px;width:60px;height:21px;background:linear-gradient(#5a9afc 0,#3c82f4 3px,#3a7cee 18px,#3070e0);border-radius:2px;box-shadow:inset -1px -1px 1px #2a5ac8"></div>
<svg style="left:536px;top:698px" width="16" height="16" viewBox="0 0 16 16"><circle cx="8" cy="8" r="7" fill="#e8eef8" stroke="#8a9ab8"/><circle cx="8" cy="8" r="4.500" fill="#2a5ad8"/><path d="M6.500 5.500l4 2.500-4 2.500z" fill="#fff"/></svg>
<div class="t ming" style="left:556px;top:700px;font-size:11.25px;color:#fff">W...</div>
<div class="a" style="left:591px;top:696px;width:60px;height:21px;background:linear-gradient(#5a9afc 0,#3c82f4 3px,#3a7cee 18px,#3070e0);border-radius:2px;box-shadow:inset -1px -1px 1px #2a5ac8"></div>
<svg style="left:598px;top:698px" width="16" height="16" viewBox="0 0 16 16"><rect x="2" y="1" width="11" height="14" fill="#d8d4c8" stroke="#5a5a5a"/><rect x="6" y="1" width="3" height="14" fill="#8a8a8a"/><rect x="5" y="5" width="5" height="4" fill="#e8e4d8" stroke="#444" stroke-width=".6"/></svg>
<div class="t ming" style="left:618px;top:700px;font-size:11.25px;color:#fff">主...</div>
<div class="a" style="left:655px;top:696px;width:58px;height:21px;background:linear-gradient(#5a9afc 0,#3c82f4 3px,#3a7cee 18px,#3070e0);border-radius:2px;box-shadow:inset -1px -1px 1px #2a5ac8"></div>
<svg style="left:662px;top:698px" width="16" height="16" viewBox="0 0 16 16"><rect x="2" y="1" width="11" height="14" fill="#d8d4c8" stroke="#5a5a5a"/><rect x="6" y="1" width="3" height="14" fill="#8a8a8a"/><rect x="5" y="5" width="5" height="4" fill="#e8e4d8" stroke="#444" stroke-width=".6"/></svg>
<div class="t ming" style="left:682px;top:700px;font-size:11.25px;color:#fff">主...</div>
<svg style="left:722px;top:699px" width="16" height="14" viewBox="0 0 16 14"><rect x="1" y="3" width="14" height="10" fill="#2a3a5a" stroke="#0a1a3a"/><path d="M3 6h10M3 8h10" stroke="#dfe8f8" stroke-dasharray="1 1"/><rect x="3" y="10" width="10" height="2" fill="#fff"/><path d="M2 2h12" stroke="#c8d4e8"/></svg>
<div class="a" style="left:748px;top:692px;width:212px;height:28px;background:linear-gradient(#1ea6f6 0,#1696ee 3px,#1290ea 14px,#1290ea 22px,#0f72cc 28px);border-left:1px solid #0a3a8a;box-shadow:inset 1px 0 0 #3ab4f8"></div>
<svg style="left:750px;top:694px" width="150" height="24" viewBox="750 694 150 24">
<circle cx="764" cy="706" r="7" fill="#d82a2a" stroke="#8a1a1a"/><path d="M760 702q4 4 0 8M764 700q5 6 0 12" stroke="#f8c8c8" fill="none"/>
<circle cx="780" cy="706" r="7" fill="#f4d02a" stroke="#8a6a0a"/><path d="M776 703q1 6 4 6t4-6" stroke="#2a2a2a" stroke-width="1.300" fill="none"/><circle cx="784" cy="710" r="1.600" fill="#d82a2a"/>
<rect x="790" y="699" width="7" height="14" fill="#d8202a"/><rect x="797" y="699" width="7" height="14" fill="#f4d82a"/><text x="790.500" y="710" font-family="Liberation Sans" font-size="10" font-weight="bold" fill="#fff">Z</text><text x="797" y="710" font-family="Liberation Sans" font-size="10" font-weight="bold" fill="#222">A</text>
<rect x="810" y="699" width="10" height="8" fill="#b8c8e8" stroke="#3a4a6a"/><rect x="806" y="704" width="10" height="8" fill="#8aa4d8" stroke="#3a4a6a"/>
<ellipse cx="833" cy="704" rx="7" ry="4" fill="#4a9ad8" stroke="#2a5a8a"/><path d="M827 708l6 5 6-5z" fill="#f4a02a" stroke="#8a5a0a" stroke-width=".6"/>
<circle cx="852" cy="706" r="5.500" fill="#b8c0c8" stroke="#5a6a7a"/><path d="M849 703q5 0 4 6" stroke="#4a4a4a" stroke-width="1.400" fill="none"/><path d="M855 711l3 3" stroke="#d8d8d8" stroke-width="1.500"/>
<rect x="862.500" y="699.500" width="14" height="14" fill="#1a3ad8" stroke="#e8ecf8" stroke-width="1.200"/><path d="M867 702.500l6 4-6 4z" fill="#fff"/>
<rect x="880" y="699" width="14" height="14" fill="#e8682a" stroke="#f4e8d8" stroke-width="1"/><path d="M883 702l8 8M891 702l-8 8" stroke="#fff" stroke-width="2"/>
</svg>
<div class="t tah" style="left:897px;top:700px;font-size:10.3px;color:#fff;">下午 08:45</div>
<!-- dialog -->
<div class="a" style="left:336px;top:163px;width:287px;height:140px;background:#ece9d8;border:1px solid #fff;border-right-color:#716f64;border-bottom-color:#716f64;box-shadow:inset -1px -1px 0 #aca899,inset 1px 1px 0 #f4f2e8"></div>
<div class="t ming" style="left:347px;top:174px;font-size:11.25px;">建檔 12-1a.wmv</div>
<div class="a" style="left:347px;top:191px;width:267px;height:18px;background:#fff;border:1px solid #6a6a6a;border-radius:3px;box-shadow:inset 0 1px 1px #bbb"></div>
<div class="a" style="left:351.00px;top:193.500px;width:5.500px;height:12.500px;background:linear-gradient(#7ae87a,#2cc030 50%,#66de68)"></div><div class="a" style="left:358.55px;top:193.500px;width:5.500px;height:12.500px;background:linear-gradient(#7ae87a,#2cc030 50%,#66de68)"></div><div class="a" style="left:366.10px;top:193.500px;width:5.500px;height:12.500px;background:linear-gradient(#7ae87a,#2cc030 50%,#66de68)"></div><div class="a" style="left:373.65px;top:193.500px;width:5.500px;height:12.500px;background:linear-gradient(#7ae87a,#2cc030 50%,#66de68)"></div><div class="a" style="left:381.20px;top:193.500px;width:5.500px;height:12.500px;background:linear-gradient(#7ae87a,#2cc030 50%,#66de68)"></div><div class="a" style="left:388.75px;top:193.500px;width:5.500px;height:12.500px;background:linear-gradient(#7ae87a,#2cc030 50%,#66de68)"></div><div class="a" style="left:396.30px;top:193.500px;width:5.500px;height:12.500px;background:linear-gradient(#7ae87a,#2cc030 50%,#66de68)"></div>
<div class="t tah" style="left:346px;top:194px;width:268px;text-align:center;font-size:12.3px;font-weight:bold;">20 %</div>
<div class="t ming" style="left:347px;top:213px;font-size:11.25px;">大約剩餘時間 (hh:mm:ss):</div>
<div class="t ming" style="left:347px;top:231.500px;font-size:11.25px;">已使用時間 (hh:mm:ss):</div>
<div class="t ming" style="left:520px;top:213px;width:91px;text-align:right;font-size:11.25px;">00:00:15</div>
<div class="t ming" style="left:520px;top:231.500px;width:91px;text-align:right;font-size:11.25px;">00:00:04</div>
<div class="a" style="left:347px;top:252px;width:13px;height:13px;background:linear-gradient(135deg,#dcdcd4,#fff);border:1px solid #1c5180"></div>
<svg style="left:349px;top:254px" width="9" height="9" viewBox="0 0 9 9"><path d="M1 4l2.500 2.500L8 1.500" stroke="#21a121" stroke-width="2" fill="none"/></svg>
<div class="t ming" style="left:362px;top:254px;font-size:11.25px;">建檔完成後關閉此對話框(<u>C</u>)</div>
<div class="a" style="left:391px;top:274px;width:67px;height:20px;background:#f5f4ea;border:1px solid #c9c7ba;border-radius:3px"></div>
<div class="t ming" style="left:391px;top:278px;width:67px;text-align:center;font-size:11.25px;color:#aca899">開啟(<u>O</u>)</div>
<div class="a" style="left:467px;top:274px;width:68px;height:20px;background:#f5f4ea;border:1px solid #c9c7ba;border-radius:3px;overflow:hidden"><div class="t ming" style="left:1px;top:3px;font-size:11.25px;color:#aca899;">開啟資料夾(<u>F</u>)</div></div>
<div class="a" style="left:545px;top:274px;width:68px;height:20px;background:linear-gradient(#fff,#f0efe6 80%,#d6d0c5);border:1px solid #003c74;border-radius:3px;box-shadow:inset 0 0 0 2px #bcd4f6"></div>
<div class="t ming" style="left:545px;top:278px;width:68px;text-align:center;font-size:11.25px">取消</div>
</body></html>
